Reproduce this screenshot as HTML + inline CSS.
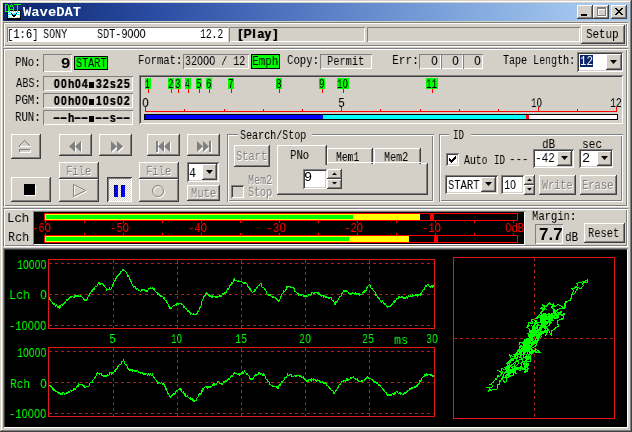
<!DOCTYPE html>
<html><head><meta charset="utf-8">
<style>
*{box-sizing:border-box;margin:0;padding:0}
html,body{width:632px;height:432px;overflow:hidden;background:#D4D0C8}
body{position:relative;font-family:"Liberation Sans",sans-serif;color:#000}
.a{position:absolute}
.t{position:absolute;white-space:nowrap;line-height:1;transform-origin:0 0;will-change:transform}
svg{position:absolute;overflow:visible}
</style></head><body>
<div class="a" style="left:0px;top:0px;width:632px;height:432px;box-shadow:inset -1px -1px #404040,inset 1px 1px #D4D0C8,inset -2px -2px #808080,inset 2px 2px #FFFFFF"></div>
<div class="a" style="left:3px;top:3px;width:626px;height:18px;background:linear-gradient(to right,#0A246A 0px,#2A4CA2 150px,#5479C2 300px,#7EA4DC 450px,#A6CAF0 590px)"></div>
<svg style="left:3px;top:3px" width="20" height="18" shape-rendering="crispEdges"><rect x="4" y="7" width="14" height="10" fill="#000"/><rect x="5" y="8" width="12" height="7" fill="#fff"/><rect x="6" y="8" width="1" height="1" fill="#00FFFF"/><rect x="8" y="8" width="1" height="1" fill="#00FFFF"/><rect x="12" y="8" width="1" height="1" fill="#00FFFF"/><rect x="14" y="8" width="1" height="1" fill="#00FFFF"/><rect x="5" y="9" width="1" height="1" fill="#00FFFF"/><rect x="7" y="9" width="1" height="1" fill="#00FFFF"/><rect x="13" y="9" width="1" height="1" fill="#00FFFF"/><rect x="15" y="9" width="1" height="1" fill="#00FFFF"/><rect x="5" y="11" width="4" height="1" fill="#00FFFF"/><rect x="13" y="11" width="4" height="1" fill="#00FFFF"/><rect x="10" y="10" width="2" height="2" fill="#00FFFF"/><rect x="8" y="10" width="1" height="1" fill="#000"/><rect x="13" y="10" width="1" height="1" fill="#000"/><rect x="9" y="11" width="1" height="2" fill="#000"/><rect x="12" y="11" width="1" height="2" fill="#000"/><rect x="10" y="12" width="2" height="2" fill="#000"/><rect x="6" y="14" width="1" height="1" fill="#00FFFF"/><rect x="8" y="14" width="1" height="1" fill="#00FFFF"/><rect x="14" y="14" width="1" height="1" fill="#00FFFF"/><rect x="16" y="14" width="1" height="1" fill="#00FFFF"/><rect x="5" y="13" width="1" height="1" fill="#00FFFF"/><rect x="2" y="1" width="1" height="8" fill="#00FF00"/><rect x="3" y="1" width="2" height="1" fill="#00FF00"/><rect x="3" y="8" width="2" height="1" fill="#00FF00"/><rect x="5" y="2" width="1" height="6" fill="#00FF00"/><rect x="6" y="4" width="1" height="5" fill="#00FF00"/><rect x="7" y="2" width="1" height="2" fill="#00FF00"/><rect x="8" y="1" width="1" height="1" fill="#00FF00"/><rect x="9" y="2" width="1" height="2" fill="#00FF00"/><rect x="10" y="4" width="1" height="5" fill="#00FF00"/><rect x="7" y="6" width="3" height="1" fill="#00FF00"/><rect x="11" y="1" width="7" height="1" fill="#00FF00"/><rect x="14" y="2" width="1" height="7" fill="#00FF00"/></svg>
<div class="t" style="left:23.0px;top:6px;font-family:'Liberation Mono';font-size:13.6px;font-weight:bold;color:#fff;transform:scaleX(1.018);">WaveDAT</div>
<div class="a" style="left:577px;top:5px;width:16px;height:14px;background:#D4D0C8;box-shadow:inset -1px -1px #404040,inset 1px 1px #FFFFFF,inset -2px -2px #808080"></div>
<div class="a" style="left:593px;top:5px;width:16px;height:14px;background:#D4D0C8;box-shadow:inset -1px -1px #404040,inset 1px 1px #FFFFFF,inset -2px -2px #808080"></div>
<div class="a" style="left:611px;top:5px;width:16px;height:14px;background:#D4D0C8;box-shadow:inset -1px -1px #404040,inset 1px 1px #FFFFFF,inset -2px -2px #808080"></div>
<div class="a" style="left:581px;top:14px;width:6px;height:2px;background:#000"></div>
<div class="a" style="left:598px;top:8px;width:9px;height:9px;border:1px solid #fff;border-top-width:2px"></div>
<div class="a" style="left:597px;top:7px;width:9px;height:9px;border:1px solid #808080;border-top-width:2px"></div>
<svg style="left:615px;top:8px" width="8" height="7" shape-rendering="crispEdges"><rect x="0" y="0" width="1" height="1"/><rect x="1" y="0" width="1" height="1"/><rect x="6" y="0" width="1" height="1"/><rect x="7" y="0" width="1" height="1"/><rect x="1" y="1" width="1" height="1"/><rect x="2" y="1" width="1" height="1"/><rect x="5" y="1" width="1" height="1"/><rect x="6" y="1" width="1" height="1"/><rect x="2" y="2" width="1" height="1"/><rect x="3" y="2" width="1" height="1"/><rect x="4" y="2" width="1" height="1"/><rect x="5" y="2" width="1" height="1"/><rect x="3" y="3" width="1" height="1"/><rect x="4" y="3" width="1" height="1"/><rect x="2" y="4" width="1" height="1"/><rect x="3" y="4" width="1" height="1"/><rect x="4" y="4" width="1" height="1"/><rect x="5" y="4" width="1" height="1"/><rect x="1" y="5" width="1" height="1"/><rect x="2" y="5" width="1" height="1"/><rect x="5" y="5" width="1" height="1"/><rect x="6" y="5" width="1" height="1"/><rect x="0" y="6" width="1" height="1"/><rect x="1" y="6" width="1" height="1"/><rect x="6" y="6" width="1" height="1"/><rect x="7" y="6" width="1" height="1"/></svg>
<div class="a" style="left:3px;top:22px;width:625px;height:25px;box-shadow:inset 1px 1px #808080,inset -1px -1px #FFFFFF,inset 2px 2px #FFFFFF,inset -2px -2px #808080"></div>
<div class="a" style="left:7px;top:27px;width:221px;height:15px;background:#fff;box-shadow:inset 1px 1px #808080,inset -1px -1px #FFFFFF"></div>
<div class="t" style="left:6.69px;top:28px;font-family:'Liberation Mono';font-size:13.6px;font-weight:normal;color:#000;transform:scaleX(0.771);">[1:6]</div>
<div class="t" style="left:43.26px;top:28px;font-family:'Liberation Mono';font-size:13.6px;font-weight:normal;color:#000;transform:scaleX(0.742);">SONY</div>
<div class="t" style="left:97.25px;top:28px;font-family:'Liberation Mono';font-size:13.6px;font-weight:normal;color:#000;transform:scaleX(0.746);">SDT-9OOO</div>
<div class="t" style="left:200.29px;top:28px;font-family:'Liberation Mono';font-size:13.6px;font-weight:normal;color:#000;transform:scaleX(0.71);">12.2</div>
<div class="a" style="left:229px;top:27px;width:136px;height:15px;box-shadow:inset 1px 1px #808080,inset -1px -1px #FFFFFF"></div>
<div class="t" style="left:237.84px;top:27px;width:4.33px;text-align:center;font-family:'Liberation Sans';font-size:13px;font-weight:bold;color:#000;transform:scaleX(0.9);transform-origin:50% 0;text-shadow:0.5px 0 #000">[</div>
<div class="t" style="left:242.66px;top:27px;width:8.67px;text-align:center;font-family:'Liberation Sans';font-size:13px;font-weight:bold;color:#000;transform:scaleX(0.9);transform-origin:50% 0;text-shadow:0.5px 0 #000">P</div>
<div class="t" style="left:252.19px;top:27px;width:3.61px;text-align:center;font-family:'Liberation Sans';font-size:13px;font-weight:bold;color:#000;transform:scaleX(0.9);transform-origin:50% 0;text-shadow:0.5px 0 #000">l</div>
<div class="t" style="left:257.38px;top:27px;width:7.23px;text-align:center;font-family:'Liberation Sans';font-size:13px;font-weight:bold;color:#000;transform:scaleX(0.9);transform-origin:50% 0;text-shadow:0.5px 0 #000">a</div>
<div class="t" style="left:264.38px;top:27px;width:7.23px;text-align:center;font-family:'Liberation Sans';font-size:13px;font-weight:bold;color:#000;transform:scaleX(0.9);transform-origin:50% 0;text-shadow:0.5px 0 #000">y</div>
<div class="t" style="left:272.84px;top:27px;width:4.33px;text-align:center;font-family:'Liberation Sans';font-size:13px;font-weight:bold;color:#000;transform:scaleX(0.9);transform-origin:50% 0;text-shadow:0.5px 0 #000">]</div>
<div class="a" style="left:367px;top:27px;width:213px;height:15px;box-shadow:inset 1px 1px #808080,inset -1px -1px #FFFFFF"></div>
<div class="a" style="left:581px;top:25px;width:44px;height:19px;background:#D4D0C8;box-shadow:inset -1px -1px #404040,inset 1px 1px #FFFFFF,inset -2px -2px #808080"></div>
<div class="t" style="left:586.21px;top:28px;font-family:'Liberation Mono';font-size:13.6px;font-weight:normal;color:#000;transform:scaleX(0.795);">Setup</div>
<div class="a" style="left:3px;top:48px;width:625px;height:159px;box-shadow:inset 1px 1px #808080,inset -1px -1px #FFFFFF,inset 2px 2px #FFFFFF,inset -2px -2px #808080"></div>
<div class="t" style="left:15.21px;top:56px;font-family:'Liberation Mono';font-size:13.6px;font-weight:normal;color:#000;transform:scaleX(0.786);">PNo:</div>
<div class="a" style="left:43px;top:54px;width:29px;height:18px;box-shadow:inset 1px 1px #808080,inset -1px -1px #FFFFFF"></div>
<div class="t" style="left:60.86px;top:56px;font-family:'Liberation Sans';font-size:14.5px;font-weight:bold;color:#000;transform:scaleX(1.143);">9</div>
<div class="a" style="left:74px;top:56px;width:34px;height:14px;background:#00FF00;border:1px solid #000"></div>
<div class="t" style="left:76.26px;top:57px;font-family:'Liberation Mono';font-size:13.6px;font-weight:normal;color:#000;transform:scaleX(0.744);">START</div>
<div class="t" style="left:16.0px;top:77px;font-family:'Liberation Mono';font-size:13.6px;font-weight:normal;color:#000;transform:scaleX(0.759);">ABS:</div>
<div class="a" style="left:43px;top:76px;width:90px;height:15px;box-shadow:inset 1px 1px #808080,inset -1px -1px #FFFFFF"></div>
<div class="t" style="left:15.21px;top:94px;font-family:'Liberation Mono';font-size:13.6px;font-weight:normal;color:#000;transform:scaleX(0.786);">PGM:</div>
<div class="a" style="left:43px;top:93px;width:90px;height:15px;box-shadow:inset 1px 1px #808080,inset -1px -1px #FFFFFF"></div>
<div class="t" style="left:15.21px;top:111px;font-family:'Liberation Mono';font-size:13.6px;font-weight:normal;color:#000;transform:scaleX(0.786);">RUN:</div>
<div class="a" style="left:43px;top:110px;width:90px;height:15px;box-shadow:inset 1px 1px #808080,inset -1px -1px #FFFFFF"></div>
<div class="t" style="left:52.88px;top:77px;width:7.23px;text-align:center;font-family:'Liberation Sans';font-size:13px;font-weight:bold;color:#000;transform:scaleX(0.8);transform-origin:50% 0;text-shadow:0.5px 0 #000">0</div>
<div class="t" style="left:59.88px;top:77px;width:7.23px;text-align:center;font-family:'Liberation Sans';font-size:13px;font-weight:bold;color:#000;transform:scaleX(0.8);transform-origin:50% 0;text-shadow:0.5px 0 #000">0</div>
<div class="t" style="left:66.53px;top:77px;width:7.94px;text-align:center;font-family:'Liberation Sans';font-size:13px;font-weight:bold;color:#000;transform:scaleX(0.8);transform-origin:50% 0;text-shadow:0.5px 0 #000">h</div>
<div class="t" style="left:73.88px;top:77px;width:7.23px;text-align:center;font-family:'Liberation Sans';font-size:13px;font-weight:bold;color:#000;transform:scaleX(0.8);transform-origin:50% 0;text-shadow:0.5px 0 #000">0</div>
<div class="t" style="left:80.88px;top:77px;width:7.23px;text-align:center;font-family:'Liberation Sans';font-size:13px;font-weight:bold;color:#000;transform:scaleX(0.8);transform-origin:50% 0;text-shadow:0.5px 0 #000">4</div>
<div class="a" style="left:89px;top:82px;width:5px;height:6px;background:#000"></div>
<div class="t" style="left:94.88px;top:77px;width:7.23px;text-align:center;font-family:'Liberation Sans';font-size:13px;font-weight:bold;color:#000;transform:scaleX(0.8);transform-origin:50% 0;text-shadow:0.5px 0 #000">3</div>
<div class="t" style="left:101.88px;top:77px;width:7.23px;text-align:center;font-family:'Liberation Sans';font-size:13px;font-weight:bold;color:#000;transform:scaleX(0.8);transform-origin:50% 0;text-shadow:0.5px 0 #000">2</div>
<div class="t" style="left:108.88px;top:77px;width:7.23px;text-align:center;font-family:'Liberation Sans';font-size:13px;font-weight:bold;color:#000;transform:scaleX(0.8);transform-origin:50% 0;text-shadow:0.5px 0 #000">s</div>
<div class="t" style="left:115.88px;top:77px;width:7.23px;text-align:center;font-family:'Liberation Sans';font-size:13px;font-weight:bold;color:#000;transform:scaleX(0.8);transform-origin:50% 0;text-shadow:0.5px 0 #000">2</div>
<div class="t" style="left:122.88px;top:77px;width:7.23px;text-align:center;font-family:'Liberation Sans';font-size:13px;font-weight:bold;color:#000;transform:scaleX(0.8);transform-origin:50% 0;text-shadow:0.5px 0 #000">5</div>
<div class="t" style="left:52.88px;top:94px;width:7.23px;text-align:center;font-family:'Liberation Sans';font-size:13px;font-weight:bold;color:#000;transform:scaleX(0.8);transform-origin:50% 0;text-shadow:0.5px 0 #000">0</div>
<div class="t" style="left:59.88px;top:94px;width:7.23px;text-align:center;font-family:'Liberation Sans';font-size:13px;font-weight:bold;color:#000;transform:scaleX(0.8);transform-origin:50% 0;text-shadow:0.5px 0 #000">0</div>
<div class="t" style="left:66.53px;top:94px;width:7.94px;text-align:center;font-family:'Liberation Sans';font-size:13px;font-weight:bold;color:#000;transform:scaleX(0.8);transform-origin:50% 0;text-shadow:0.5px 0 #000">h</div>
<div class="t" style="left:73.88px;top:94px;width:7.23px;text-align:center;font-family:'Liberation Sans';font-size:13px;font-weight:bold;color:#000;transform:scaleX(0.8);transform-origin:50% 0;text-shadow:0.5px 0 #000">0</div>
<div class="t" style="left:80.88px;top:94px;width:7.23px;text-align:center;font-family:'Liberation Sans';font-size:13px;font-weight:bold;color:#000;transform:scaleX(0.8);transform-origin:50% 0;text-shadow:0.5px 0 #000">0</div>
<div class="a" style="left:89px;top:99px;width:5px;height:6px;background:#000"></div>
<div class="t" style="left:94.88px;top:94px;width:7.23px;text-align:center;font-family:'Liberation Sans';font-size:13px;font-weight:bold;color:#000;transform:scaleX(0.8);transform-origin:50% 0;text-shadow:0.5px 0 #000">1</div>
<div class="t" style="left:101.88px;top:94px;width:7.23px;text-align:center;font-family:'Liberation Sans';font-size:13px;font-weight:bold;color:#000;transform:scaleX(0.8);transform-origin:50% 0;text-shadow:0.5px 0 #000">0</div>
<div class="t" style="left:108.88px;top:94px;width:7.23px;text-align:center;font-family:'Liberation Sans';font-size:13px;font-weight:bold;color:#000;transform:scaleX(0.8);transform-origin:50% 0;text-shadow:0.5px 0 #000">s</div>
<div class="t" style="left:115.88px;top:94px;width:7.23px;text-align:center;font-family:'Liberation Sans';font-size:13px;font-weight:bold;color:#000;transform:scaleX(0.8);transform-origin:50% 0;text-shadow:0.5px 0 #000">0</div>
<div class="t" style="left:122.88px;top:94px;width:7.23px;text-align:center;font-family:'Liberation Sans';font-size:13px;font-weight:bold;color:#000;transform:scaleX(0.8);transform-origin:50% 0;text-shadow:0.5px 0 #000">2</div>
<div class="t" style="left:54.34px;top:111px;width:4.33px;text-align:center;font-family:'Liberation Sans';font-size:13px;font-weight:bold;color:#000;transform:scaleX(1.6);transform-origin:50% 0;text-shadow:0.5px 0 #000">-</div>
<div class="t" style="left:61.34px;top:111px;width:4.33px;text-align:center;font-family:'Liberation Sans';font-size:13px;font-weight:bold;color:#000;transform:scaleX(1.6);transform-origin:50% 0;text-shadow:0.5px 0 #000">-</div>
<div class="t" style="left:66.53px;top:111px;width:7.94px;text-align:center;font-family:'Liberation Sans';font-size:13px;font-weight:bold;color:#000;transform:scaleX(0.8);transform-origin:50% 0;text-shadow:0.5px 0 #000">h</div>
<div class="t" style="left:75.34px;top:111px;width:4.33px;text-align:center;font-family:'Liberation Sans';font-size:13px;font-weight:bold;color:#000;transform:scaleX(1.6);transform-origin:50% 0;text-shadow:0.5px 0 #000">-</div>
<div class="t" style="left:82.34px;top:111px;width:4.33px;text-align:center;font-family:'Liberation Sans';font-size:13px;font-weight:bold;color:#000;transform:scaleX(1.6);transform-origin:50% 0;text-shadow:0.5px 0 #000">-</div>
<div class="a" style="left:89px;top:116px;width:5px;height:6px;background:#000"></div>
<div class="t" style="left:96.34px;top:111px;width:4.33px;text-align:center;font-family:'Liberation Sans';font-size:13px;font-weight:bold;color:#000;transform:scaleX(1.6);transform-origin:50% 0;text-shadow:0.5px 0 #000">-</div>
<div class="t" style="left:103.34px;top:111px;width:4.33px;text-align:center;font-family:'Liberation Sans';font-size:13px;font-weight:bold;color:#000;transform:scaleX(1.6);transform-origin:50% 0;text-shadow:0.5px 0 #000">-</div>
<div class="t" style="left:108.88px;top:111px;width:7.23px;text-align:center;font-family:'Liberation Sans';font-size:13px;font-weight:bold;color:#000;transform:scaleX(0.8);transform-origin:50% 0;text-shadow:0.5px 0 #000">s</div>
<div class="t" style="left:117.34px;top:111px;width:4.33px;text-align:center;font-family:'Liberation Sans';font-size:13px;font-weight:bold;color:#000;transform:scaleX(1.6);transform-origin:50% 0;text-shadow:0.5px 0 #000">-</div>
<div class="t" style="left:124.34px;top:111px;width:4.33px;text-align:center;font-family:'Liberation Sans';font-size:13px;font-weight:bold;color:#000;transform:scaleX(1.6);transform-origin:50% 0;text-shadow:0.5px 0 #000">-</div>
<div class="t" style="left:138.23px;top:54px;font-family:'Liberation Mono';font-size:13.6px;font-weight:normal;color:#000;transform:scaleX(0.774);">Format:</div>
<div class="a" style="left:183px;top:54px;width:66px;height:15px;box-shadow:inset 1px 1px #808080,inset -1px -1px #FFFFFF"></div>
<div class="t" style="left:185.26px;top:55px;font-family:'Liberation Mono';font-size:13.6px;font-weight:normal;color:#000;transform:scaleX(0.738);">32OOO / 12</div>
<div class="a" style="left:251px;top:54px;width:29px;height:15px;background:#00FF00;border:1px solid #000"></div>
<div class="t" style="left:252.19px;top:55px;font-family:'Liberation Mono';font-size:13.6px;font-weight:normal;color:#000;transform:scaleX(0.806);">Emph</div>
<div class="t" style="left:287.22px;top:54px;font-family:'Liberation Mono';font-size:13.6px;font-weight:normal;color:#000;transform:scaleX(0.784);">Copy:</div>
<div class="a" style="left:320px;top:54px;width:52px;height:15px;box-shadow:inset 1px 1px #808080,inset -1px -1px #FFFFFF"></div>
<div class="t" style="left:327.24px;top:55px;font-family:'Liberation Mono';font-size:13.6px;font-weight:normal;color:#000;transform:scaleX(0.761);">Permit</div>
<div class="t" style="left:392.18px;top:54px;font-family:'Liberation Mono';font-size:13.6px;font-weight:normal;color:#000;transform:scaleX(0.821);">Err:</div>
<div class="a" style="left:419px;top:54px;width:22px;height:15px;box-shadow:inset 1px 1px #808080,inset -1px -1px #FFFFFF"></div>
<div class="a" style="left:441px;top:54px;width:22px;height:15px;box-shadow:inset 1px 1px #808080,inset -1px -1px #FFFFFF"></div>
<div class="a" style="left:463px;top:54px;width:20px;height:15px;box-shadow:inset 1px 1px #808080,inset -1px -1px #FFFFFF"></div>
<div class="t" style="left:431.17px;top:55px;font-family:'Liberation Mono';font-size:13.6px;font-weight:normal;color:#000;transform:scaleX(0.833);">O</div>
<div class="t" style="left:452.17px;top:55px;font-family:'Liberation Mono';font-size:13.6px;font-weight:normal;color:#000;transform:scaleX(0.833);">O</div>
<div class="t" style="left:474.17px;top:55px;font-family:'Liberation Mono';font-size:13.6px;font-weight:normal;color:#000;transform:scaleX(0.833);">O</div>
<div class="t" style="left:503.0px;top:54px;font-family:'Liberation Mono';font-size:13.6px;font-weight:normal;color:#000;transform:scaleX(0.737);">Tape Length:</div>
<div class="a" style="left:577px;top:52px;width:46px;height:20px;background:#fff;box-shadow:inset 1px 1px #808080,inset -1px -1px #FFFFFF,inset 2px 2px #404040,inset -2px -2px #D4D0C8"></div>
<div class="a" style="left:580px;top:55px;width:13px;height:12px;background:#0A246A"></div>
<div class="t" style="left:580.21px;top:55px;font-family:'Liberation Mono';font-size:13.6px;font-weight:normal;color:#fff;transform:scaleX(0.786);">12</div>
<div class="a" style="left:606px;top:54px;width:16px;height:16px;background:#D4D0C8;box-shadow:inset -1px -1px #404040,inset 1px 1px #FFFFFF,inset -2px -2px #808080"></div>
<svg style="left:610px;top:60px" width="7" height="4"><path d="M0 0h7L3.5 4z" fill="#000"/></svg>
<div class="a" style="left:139px;top:75px;width:484px;height:49px;background:#D4D0C8;box-shadow:inset 1px 1px #808080,inset -1px -1px #FFFFFF,inset 2px 2px #404040,inset -2px -2px #D4D0C8"></div>
<div class="a" style="left:145px;top:78px;width:6px;height:11px;background:#00FF00"></div>
<div class="a" style="left:148px;top:89px;width:1px;height:4px;background:#FF0000"></div>
<div class="t" style="left:145.43px;top:78px;font-family:'Liberation Mono';font-size:13.6px;font-weight:normal;color:#000;transform:scaleX(0.571);">1</div>
<div class="a" style="left:168px;top:78px;width:6px;height:11px;background:#00FF00"></div>
<div class="a" style="left:171px;top:89px;width:1px;height:4px;background:#FF0000"></div>
<div class="t" style="left:168.33px;top:78px;font-family:'Liberation Mono';font-size:13.6px;font-weight:normal;color:#000;transform:scaleX(0.667);">2</div>
<div class="a" style="left:175px;top:78px;width:6px;height:11px;background:#00FF00"></div>
<div class="a" style="left:178px;top:89px;width:1px;height:4px;background:#FF0000"></div>
<div class="t" style="left:175.33px;top:78px;font-family:'Liberation Mono';font-size:13.6px;font-weight:normal;color:#000;transform:scaleX(0.667);">3</div>
<div class="a" style="left:185px;top:78px;width:6px;height:11px;background:#00FF00"></div>
<div class="a" style="left:188px;top:89px;width:1px;height:4px;background:#FF0000"></div>
<div class="t" style="left:185.43px;top:78px;font-family:'Liberation Mono';font-size:13.6px;font-weight:normal;color:#000;transform:scaleX(0.571);">4</div>
<div class="a" style="left:196px;top:78px;width:6px;height:11px;background:#00FF00"></div>
<div class="a" style="left:199px;top:89px;width:1px;height:4px;background:#FF0000"></div>
<div class="t" style="left:196.33px;top:78px;font-family:'Liberation Mono';font-size:13.6px;font-weight:normal;color:#000;transform:scaleX(0.667);">5</div>
<div class="a" style="left:206px;top:78px;width:6px;height:11px;background:#00FF00"></div>
<div class="a" style="left:209px;top:89px;width:1px;height:4px;background:#FF0000"></div>
<div class="t" style="left:206.33px;top:78px;font-family:'Liberation Mono';font-size:13.6px;font-weight:normal;color:#000;transform:scaleX(0.667);">6</div>
<div class="a" style="left:228px;top:78px;width:6px;height:11px;background:#00FF00"></div>
<div class="a" style="left:231px;top:89px;width:1px;height:4px;background:#FF0000"></div>
<div class="t" style="left:228.33px;top:78px;font-family:'Liberation Mono';font-size:13.6px;font-weight:normal;color:#000;transform:scaleX(0.667);">7</div>
<div class="a" style="left:276px;top:78px;width:6px;height:11px;background:#00FF00"></div>
<div class="a" style="left:279px;top:89px;width:1px;height:4px;background:#FF0000"></div>
<div class="t" style="left:276.33px;top:78px;font-family:'Liberation Mono';font-size:13.6px;font-weight:normal;color:#000;transform:scaleX(0.667);">8</div>
<div class="a" style="left:319px;top:78px;width:6px;height:11px;background:#00FF00"></div>
<div class="a" style="left:322px;top:89px;width:1px;height:4px;background:#FF0000"></div>
<div class="t" style="left:319.33px;top:78px;font-family:'Liberation Mono';font-size:13.6px;font-weight:normal;color:#000;transform:scaleX(0.667);">9</div>
<div class="a" style="left:337px;top:78px;width:12px;height:11px;background:#00FF00"></div>
<div class="a" style="left:343px;top:89px;width:1px;height:4px;background:#FF0000"></div>
<div class="t" style="left:337.33px;top:78px;font-family:'Liberation Mono';font-size:13.6px;font-weight:normal;color:#000;transform:scaleX(0.667);">1O</div>
<div class="a" style="left:426px;top:78px;width:12px;height:11px;background:#00FF00"></div>
<div class="a" style="left:432px;top:89px;width:1px;height:4px;background:#FF0000"></div>
<div class="t" style="left:426.33px;top:78px;font-family:'Liberation Mono';font-size:13.6px;font-weight:normal;color:#000;transform:scaleX(0.667);">11</div>
<div class="t" style="left:142.17px;top:97px;font-family:'Liberation Mono';font-size:13.6px;font-weight:normal;color:#000;transform:scaleX(0.833);">O</div>
<div class="t" style="left:338.17px;top:97px;font-family:'Liberation Mono';font-size:13.6px;font-weight:normal;color:#000;transform:scaleX(0.833);">5</div>
<div class="t" style="left:531.33px;top:97px;font-family:'Liberation Mono';font-size:13.6px;font-weight:normal;color:#000;transform:scaleX(0.667);">1O</div>
<div class="t" style="left:610.29px;top:97px;font-family:'Liberation Mono';font-size:13.6px;font-weight:normal;color:#000;transform:scaleX(0.714);">12</div>
<div class="a" style="left:145px;top:111px;width:472px;height:1px;background:#FF0000"></div>
<div class="a" style="left:145px;top:107px;width:1px;height:5px;background:#FF0000"></div>
<div class="a" style="left:184px;top:109px;width:1px;height:3px;background:#FF0000"></div>
<div class="a" style="left:224px;top:109px;width:1px;height:3px;background:#FF0000"></div>
<div class="a" style="left:263px;top:109px;width:1px;height:3px;background:#FF0000"></div>
<div class="a" style="left:302px;top:109px;width:1px;height:3px;background:#FF0000"></div>
<div class="a" style="left:341px;top:107px;width:1px;height:5px;background:#FF0000"></div>
<div class="a" style="left:380px;top:109px;width:1px;height:3px;background:#FF0000"></div>
<div class="a" style="left:420px;top:109px;width:1px;height:3px;background:#FF0000"></div>
<div class="a" style="left:459px;top:109px;width:1px;height:3px;background:#FF0000"></div>
<div class="a" style="left:498px;top:109px;width:1px;height:3px;background:#FF0000"></div>
<div class="a" style="left:538px;top:107px;width:1px;height:5px;background:#FF0000"></div>
<div class="a" style="left:577px;top:109px;width:1px;height:3px;background:#FF0000"></div>
<div class="a" style="left:616px;top:107px;width:1px;height:5px;background:#FF0000"></div>
<div class="a" style="left:144px;top:114px;width:474px;height:6px;background:#fff;border:1px solid #000"></div>
<div class="a" style="left:145px;top:115px;width:178px;height:4px;background:#0000FF"></div>
<div class="a" style="left:323px;top:115px;width:203px;height:4px;background:#00FFFF"></div>
<div class="a" style="left:526px;top:115px;width:3px;height:4px;background:#FF0000"></div>
<div class="a" style="left:11px;top:134px;width:30px;height:25px;background:#D4D0C8;box-shadow:inset -1px -1px #404040,inset 1px 1px #FFFFFF,inset -2px -2px #808080"></div>
<svg style="left:0;top:0" width="632" height="432" shape-rendering="crispEdges"><rect x="24" y="140" width="1" height="1" fill="#808080"/><rect x="24" y="140" width="1" height="1" fill="#808080"/><rect x="23" y="141" width="1" height="1" fill="#808080"/><rect x="25" y="141" width="1" height="1" fill="#808080"/><rect x="22" y="142" width="1" height="1" fill="#808080"/><rect x="26" y="142" width="1" height="1" fill="#808080"/><rect x="21" y="143" width="1" height="1" fill="#808080"/><rect x="27" y="143" width="1" height="1" fill="#808080"/><rect x="20" y="144" width="1" height="1" fill="#808080"/><rect x="28" y="144" width="1" height="1" fill="#808080"/><rect x="19" y="145" width="1" height="1" fill="#808080"/><rect x="29" y="145" width="1" height="1" fill="#808080"/><rect x="19" y="146" width="1" height="1" fill="#808080"/><rect x="20" y="146" width="11" height="1" fill="#fff"/><rect x="19" y="149" width="11" height="1" fill="#808080"/><rect x="19" y="150" width="1" height="2" fill="#808080"/><rect x="20" y="152" width="11" height="1" fill="#fff"/><rect x="30" y="150" width="1" height="2" fill="#fff"/></svg>
<div class="a" style="left:59px;top:134px;width:33px;height:22px;background:#D4D0C8;box-shadow:inset -1px -1px #404040,inset 1px 1px #FFFFFF,inset -2px -2px #808080"></div>
<div class="a" style="left:99px;top:134px;width:33px;height:22px;background:#D4D0C8;box-shadow:inset -1px -1px #404040,inset 1px 1px #FFFFFF,inset -2px -2px #808080"></div>
<div class="a" style="left:147px;top:134px;width:33px;height:22px;background:#D4D0C8;box-shadow:inset -1px -1px #404040,inset 1px 1px #FFFFFF,inset -2px -2px #808080"></div>
<div class="a" style="left:187px;top:134px;width:33px;height:22px;background:#D4D0C8;box-shadow:inset -1px -1px #404040,inset 1px 1px #FFFFFF,inset -2px -2px #808080"></div>
<svg style="left:0;top:0" width="632" height="432"><g transform="translate(1,1)"><path d="M69 146.5L75 141V152z" fill="#fff"/><path d="M75 146.5L81 141V152z" fill="#fff"/></g><path d="M69 146.5L75 141V152z" fill="#808080"/><path d="M75 146.5L81 141V152z" fill="#808080"/></svg>
<svg style="left:0;top:0" width="632" height="432"><g transform="translate(1,1)"><path d="M117 146.5L111 141V152z" fill="#fff"/><path d="M123 146.5L117 141V152z" fill="#fff"/></g><path d="M117 146.5L111 141V152z" fill="#808080"/><path d="M123 146.5L117 141V152z" fill="#808080"/></svg>
<svg style="left:0;top:0" width="632" height="432"><g transform="translate(1,1)"><rect x="156" y="141" width="2" height="11" fill="#fff"/><path d="M158 146.5L164 141V152z" fill="#fff"/><path d="M164 146.5L170 141V152z" fill="#fff"/></g><rect x="156" y="141" width="2" height="11" fill="#808080"/><path d="M158 146.5L164 141V152z" fill="#808080"/><path d="M164 146.5L170 141V152z" fill="#808080"/></svg>
<svg style="left:0;top:0" width="632" height="432"><g transform="translate(1,1)"><path d="M203 146.5L197 141V152z" fill="#fff"/><path d="M209 146.5L203 141V152z" fill="#fff"/><rect x="209" y="141" width="2" height="11" fill="#fff"/></g><path d="M203 146.5L197 141V152z" fill="#808080"/><path d="M209 146.5L203 141V152z" fill="#808080"/><rect x="209" y="141" width="2" height="11" fill="#808080"/></svg>
<div class="a" style="left:11px;top:177px;width:40px;height:25px;background:#D4D0C8;box-shadow:inset -1px -1px #404040,inset 1px 1px #FFFFFF,inset -2px -2px #808080"></div>
<div class="a" style="left:25px;top:185px;width:11px;height:11px;background:#fff"></div>
<div class="a" style="left:24px;top:184px;width:11px;height:11px;background:#000"></div>
<div class="a" style="left:59px;top:162px;width:40px;height:17px;background:#D4D0C8;box-shadow:inset -1px -1px #404040,inset 1px 1px #FFFFFF,inset -2px -2px #808080"></div>
<div class="t" style="left:66.23px;top:165px;font-family:'Liberation Mono';font-size:13.6px;font-weight:normal;color:#808080;transform:scaleX(0.774);text-shadow:1px 1px #fff;">File</div>
<div class="a" style="left:59px;top:179px;width:40px;height:23px;background:#D4D0C8;box-shadow:inset -1px -1px #404040,inset 1px 1px #FFFFFF,inset -2px -2px #808080"></div>
<svg style="left:0;top:0" width="632" height="432"><path d="M73.5 184.5v12l12-6z" fill="none" stroke="#fff" transform="translate(1,1)"/><path d="M73.5 184.5v12l12-6z" fill="none" stroke="#808080"/></svg>
<div class="a" style="left:107px;top:177px;width:25px;height:25px;background:repeating-conic-gradient(#fff 0 25%,#D4D0C8 0 50%) 0 0/2px 2px;box-shadow:inset 1px 1px #404040,inset -1px -1px #FFFFFF,inset 2px 2px #808080"></div>
<div class="a" style="left:114px;top:185px;width:4px;height:12px;background:#0000FF;box-shadow:inset 1px 1px #000080"></div>
<div class="a" style="left:121px;top:185px;width:4px;height:12px;background:#0000FF;box-shadow:inset 1px 1px #000080"></div>
<div class="a" style="left:139px;top:162px;width:40px;height:17px;background:#D4D0C8;box-shadow:inset -1px -1px #404040,inset 1px 1px #FFFFFF,inset -2px -2px #808080"></div>
<div class="t" style="left:146.23px;top:165px;font-family:'Liberation Mono';font-size:13.6px;font-weight:normal;color:#808080;transform:scaleX(0.774);text-shadow:1px 1px #fff;">File</div>
<div class="a" style="left:139px;top:179px;width:40px;height:23px;background:#D4D0C8;box-shadow:inset -1px -1px #404040,inset 1px 1px #FFFFFF,inset -2px -2px #808080"></div>
<svg style="left:0;top:0" width="632" height="432"><circle cx="159" cy="192" r="5.5" fill="none" stroke="#fff"/><circle cx="158" cy="191" r="5.5" fill="none" stroke="#808080"/></svg>
<div class="a" style="left:187px;top:162px;width:32px;height:20px;background:#fff;box-shadow:inset 1px 1px #808080,inset -1px -1px #FFFFFF,inset 2px 2px #404040,inset -2px -2px #D4D0C8"></div>
<div class="t" style="left:189.14px;top:167px;font-family:'Liberation Mono';font-size:13.6px;font-weight:normal;color:#000;transform:scaleX(0.857);">4</div>
<div class="a" style="left:202px;top:164px;width:15px;height:16px;background:#D4D0C8;box-shadow:inset -1px -1px #404040,inset 1px 1px #FFFFFF,inset -2px -2px #808080"></div>
<svg style="left:206px;top:170px" width="7" height="4"><path d="M0 0h7L3.5 4z" fill="#000"/></svg>
<div class="a" style="left:187px;top:185px;width:33px;height:16px;background:#D4D0C8;box-shadow:inset -1px -1px #404040,inset 1px 1px #FFFFFF,inset -2px -2px #808080"></div>
<div class="t" style="left:191.23px;top:187px;font-family:'Liberation Mono';font-size:13.6px;font-weight:normal;color:#808080;transform:scaleX(0.774);text-shadow:1px 1px #fff;">Mute</div>
<div class="a" style="left:227px;top:134px;width:207px;height:68px;box-shadow:inset 1px 1px #808080,inset -1px -1px #FFFFFF,inset 2px 2px #FFFFFF,inset -2px -2px #808080"></div>
<div class="a" style="left:238px;top:127px;width:74px;height:11px;background:#D4D0C8"></div>
<div class="t" style="left:240.26px;top:129px;font-family:'Liberation Mono';font-size:13.6px;font-weight:normal;color:#000;transform:scaleX(0.739);">Search/Stop</div>
<div class="a" style="left:234px;top:145px;width:36px;height:22px;background:#D4D0C8;box-shadow:inset -1px -1px #404040,inset 1px 1px #FFFFFF,inset -2px -2px #808080"></div>
<div class="t" style="left:236.24px;top:150px;font-family:'Liberation Mono';font-size:13.6px;font-weight:normal;color:#808080;transform:scaleX(0.763);text-shadow:1px 1px #fff;">Start</div>
<div class="a" style="left:231px;top:185px;width:13px;height:13px;background:#D4D0C8;box-shadow:inset 1px 1px #808080,inset -1px -1px #FFFFFF,inset 2px 2px #404040,inset -2px -2px #D4D0C8"></div>
<div class="t" style="left:248.26px;top:174px;font-family:'Liberation Mono';font-size:13.6px;font-weight:normal;color:#808080;transform:scaleX(0.742);text-shadow:1px 1px #fff;">Mem2</div>
<div class="t" style="left:248.26px;top:186px;font-family:'Liberation Mono';font-size:13.6px;font-weight:normal;color:#808080;transform:scaleX(0.742);text-shadow:1px 1px #fff;">Stop</div>
<div class="a" style="left:277px;top:163px;width:151px;height:32px;background:#D4D0C8;box-shadow:inset -1px -1px #404040,inset 1px 1px #FFFFFF,inset -2px -2px #808080"></div>
<div class="a" style="left:327px;top:148px;width:46px;height:16px;background:#D4D0C8;box-shadow:inset -1px 0 #404040,inset 1px 1px #FFFFFF,inset -2px 0 #808080"></div>
<div class="a" style="left:374px;top:148px;width:47px;height:16px;background:#D4D0C8;box-shadow:inset -1px 0 #404040,inset 1px 1px #FFFFFF,inset -2px 0 #808080"></div>
<div class="a" style="left:327px;top:162px;width:94px;height:1px;background:#FFFFFF"></div>
<div class="a" style="left:277px;top:145px;width:50px;height:20px;background:#D4D0C8;box-shadow:inset -1px 0 #404040,inset 1px 1px #FFFFFF,inset -2px 0 #808080"></div>
<div class="t" style="left:290.22px;top:149px;font-family:'Liberation Mono';font-size:13.6px;font-weight:normal;color:#000;transform:scaleX(0.783);">PNo</div>
<div class="t" style="left:336.29px;top:151px;font-family:'Liberation Mono';font-size:13.6px;font-weight:normal;color:#000;transform:scaleX(0.71);">Mem1</div>
<div class="t" style="left:384.26px;top:151px;font-family:'Liberation Mono';font-size:13.6px;font-weight:normal;color:#000;transform:scaleX(0.742);">Mem2</div>
<div class="a" style="left:303px;top:169px;width:24px;height:20px;background:#fff;box-shadow:inset 1px 1px #808080,inset -1px -1px #FFFFFF,inset 2px 2px #404040,inset -2px -2px #D4D0C8"></div>
<div class="t" style="left:304.0px;top:171px;font-family:'Liberation Mono';font-size:13.6px;font-weight:normal;color:#000;transform:scaleX(1.0);">9</div>
<div class="a" style="left:327px;top:169px;width:15px;height:10px;background:#D4D0C8;box-shadow:inset -1px -1px #404040,inset 1px 1px #FFFFFF,inset -2px -2px #808080"></div>
<div class="a" style="left:327px;top:179px;width:15px;height:10px;background:#D4D0C8;box-shadow:inset -1px -1px #404040,inset 1px 1px #FFFFFF,inset -2px -2px #808080"></div>
<svg style="left:0;top:0" width="632" height="432"><path d="M332 175h5l-2.5-2.5z M332 182h5l-2.5 2.5z" fill="#000"/></svg>
<div class="a" style="left:439px;top:134px;width:184px;height:68px;box-shadow:inset 1px 1px #808080,inset -1px -1px #FFFFFF,inset 2px 2px #FFFFFF,inset -2px -2px #808080"></div>
<div class="a" style="left:449px;top:127px;width:22px;height:11px;background:#D4D0C8"></div>
<div class="t" style="left:453.33px;top:129px;font-family:'Liberation Mono';font-size:13.6px;font-weight:normal;color:#000;transform:scaleX(0.667);">ID</div>
<div class="t" style="left:542.2px;top:138px;font-family:'Liberation Mono';font-size:13.6px;font-weight:normal;color:#000;transform:scaleX(0.8);">dB</div>
<div class="t" style="left:582.18px;top:138px;font-family:'Liberation Mono';font-size:13.6px;font-weight:normal;color:#000;transform:scaleX(0.818);">sec</div>
<div class="a" style="left:446px;top:153px;width:13px;height:13px;background:#fff;box-shadow:inset 1px 1px #808080,inset -1px -1px #FFFFFF,inset 2px 2px #404040,inset -2px -2px #D4D0C8"></div>
<svg style="left:449px;top:156px" width="7" height="7" shape-rendering="crispEdges"><rect x="6" y="0" width="1" height="1"/><rect x="5" y="1" width="1" height="1"/><rect x="6" y="1" width="1" height="1"/><rect x="0" y="2" width="1" height="1"/><rect x="4" y="2" width="1" height="1"/><rect x="5" y="2" width="1" height="1"/><rect x="6" y="2" width="1" height="1"/><rect x="0" y="3" width="1" height="1"/><rect x="1" y="3" width="1" height="1"/><rect x="3" y="3" width="1" height="1"/><rect x="4" y="3" width="1" height="1"/><rect x="5" y="3" width="1" height="1"/><rect x="0" y="4" width="1" height="1"/><rect x="1" y="4" width="1" height="1"/><rect x="2" y="4" width="1" height="1"/><rect x="3" y="4" width="1" height="1"/><rect x="4" y="4" width="1" height="1"/><rect x="1" y="5" width="1" height="1"/><rect x="2" y="5" width="1" height="1"/><rect x="3" y="5" width="1" height="1"/><rect x="2" y="6" width="1" height="1"/></svg>
<div class="t" style="left:464.0px;top:154px;font-family:'Liberation Mono';font-size:13.6px;font-weight:normal;color:#000;transform:scaleX(0.719);">Auto</div>
<div class="t" style="left:494.33px;top:154px;font-family:'Liberation Mono';font-size:13.6px;font-weight:normal;color:#000;transform:scaleX(0.667);">ID</div>
<div class="t" style="left:509.4px;top:153px;font-family:'Liberation Mono';font-size:13.6px;font-weight:normal;color:#000;transform:scaleX(0.8);">---</div>
<div class="a" style="left:533px;top:149px;width:41px;height:19px;background:#fff;box-shadow:inset 1px 1px #808080,inset -1px -1px #FFFFFF,inset 2px 2px #404040,inset -2px -2px #D4D0C8"></div>
<div class="t" style="left:535.38px;top:152px;font-family:'Liberation Mono';font-size:13.6px;font-weight:normal;color:#000;transform:scaleX(0.81);">-42</div>
<div class="a" style="left:557px;top:151px;width:15px;height:15px;background:#D4D0C8;box-shadow:inset -1px -1px #404040,inset 1px 1px #FFFFFF,inset -2px -2px #808080"></div>
<div class="a" style="left:579px;top:149px;width:34px;height:19px;background:#fff;box-shadow:inset 1px 1px #808080,inset -1px -1px #FFFFFF,inset 2px 2px #404040,inset -2px -2px #D4D0C8"></div>
<div class="t" style="left:582.0px;top:152px;font-family:'Liberation Mono';font-size:13.6px;font-weight:normal;color:#000;transform:scaleX(1.0);">2</div>
<div class="a" style="left:597px;top:151px;width:15px;height:15px;background:#D4D0C8;box-shadow:inset -1px -1px #404040,inset 1px 1px #FFFFFF,inset -2px -2px #808080"></div>
<svg style="left:0;top:0" width="632" height="432"><path d="M561 156h7l-3.5 4z M601 156h7l-3.5 4z" fill="#000"/></svg>
<div class="a" style="left:445px;top:175px;width:53px;height:19px;background:#fff;box-shadow:inset 1px 1px #808080,inset -1px -1px #FFFFFF,inset 2px 2px #404040,inset -2px -2px #D4D0C8"></div>
<div class="t" style="left:448.23px;top:179px;font-family:'Liberation Mono';font-size:13.6px;font-weight:normal;color:#000;transform:scaleX(0.769);">START</div>
<div class="a" style="left:481px;top:177px;width:15px;height:15px;background:#D4D0C8;box-shadow:inset -1px -1px #404040,inset 1px 1px #FFFFFF,inset -2px -2px #808080"></div>
<svg style="left:0;top:0" width="632" height="432"><path d="M485 182h7l-3.5 4z" fill="#000"/></svg>
<div class="a" style="left:501px;top:175px;width:23px;height:19px;background:#fff;box-shadow:inset 1px 1px #808080,inset -1px -1px #FFFFFF,inset 2px 2px #404040,inset -2px -2px #D4D0C8"></div>
<div class="t" style="left:504.27px;top:179px;font-family:'Liberation Mono';font-size:13.6px;font-weight:normal;color:#000;transform:scaleX(0.733);">1O</div>
<div class="a" style="left:524px;top:175px;width:11px;height:10px;background:#D4D0C8;box-shadow:inset -1px -1px #404040,inset 1px 1px #FFFFFF,inset -2px -2px #808080"></div>
<div class="a" style="left:524px;top:185px;width:11px;height:10px;background:#D4D0C8;box-shadow:inset -1px -1px #404040,inset 1px 1px #FFFFFF,inset -2px -2px #808080"></div>
<svg style="left:0;top:0" width="632" height="432"><path d="M527 181h5l-2.5-2.5z M527 188h5l-2.5 2.5z" fill="#000"/></svg>
<div class="a" style="left:539px;top:175px;width:37px;height:20px;background:#D4D0C8;box-shadow:inset -1px -1px #404040,inset 1px 1px #FFFFFF,inset -2px -2px #808080"></div>
<div class="t" style="left:542.0px;top:179px;font-family:'Liberation Mono';font-size:13.6px;font-weight:normal;color:#808080;transform:scaleX(0.75);text-shadow:1px 1px #fff;">Write</div>
<div class="a" style="left:580px;top:175px;width:37px;height:20px;background:#D4D0C8;box-shadow:inset -1px -1px #404040,inset 1px 1px #FFFFFF,inset -2px -2px #808080"></div>
<div class="t" style="left:582.23px;top:179px;font-family:'Liberation Mono';font-size:13.6px;font-weight:normal;color:#808080;transform:scaleX(0.769);text-shadow:1px 1px #fff;">Erase</div>
<div class="a" style="left:3px;top:208px;width:625px;height:39px;box-shadow:inset 1px 1px #808080,inset -1px -1px #FFFFFF,inset 2px 2px #FFFFFF,inset -2px -2px #808080"></div>
<div class="t" style="left:7.19px;top:212px;font-family:'Liberation Mono';font-size:13.6px;font-weight:normal;color:#000;transform:scaleX(0.905);">Lch</div>
<div class="t" style="left:8.14px;top:231px;font-family:'Liberation Mono';font-size:13.6px;font-weight:normal;color:#000;transform:scaleX(0.864);">Rch</div>
<div class="a" style="left:33px;top:211px;width:492px;height:34px;background:#000;box-shadow:inset 1px 1px #808080,inset -1px -1px #FFFFFF"></div>
<div class="a" style="left:44px;top:213px;width:474px;height:8px;border:1px solid #FF0000"></div>
<div class="a" style="left:45px;top:214px;width:375px;height:6px;background:#FFFF00"></div>
<div class="a" style="left:46px;top:215px;width:307px;height:4px;background:#00FF00"></div>
<div class="a" style="left:430px;top:213px;width:4px;height:8px;background:#FF0000"></div>
<div class="a" style="left:44px;top:235px;width:474px;height:8px;border:1px solid #FF0000"></div>
<div class="a" style="left:45px;top:236px;width:364px;height:6px;background:#FFFF00"></div>
<div class="a" style="left:46px;top:237px;width:303px;height:4px;background:#00FF00"></div>
<div class="a" style="left:434px;top:235px;width:4px;height:8px;background:#FF0000"></div>
<div class="a" style="left:45px;top:221px;width:1px;height:2px;background:#FF0000"></div>
<div class="a" style="left:45px;top:233px;width:1px;height:2px;background:#FF0000"></div>
<div class="a" style="left:84px;top:221px;width:1px;height:2px;background:#FF0000"></div>
<div class="a" style="left:84px;top:233px;width:1px;height:2px;background:#FF0000"></div>
<div class="a" style="left:123px;top:221px;width:1px;height:2px;background:#FF0000"></div>
<div class="a" style="left:123px;top:233px;width:1px;height:2px;background:#FF0000"></div>
<div class="a" style="left:162px;top:221px;width:1px;height:2px;background:#FF0000"></div>
<div class="a" style="left:162px;top:233px;width:1px;height:2px;background:#FF0000"></div>
<div class="a" style="left:201px;top:221px;width:1px;height:2px;background:#FF0000"></div>
<div class="a" style="left:201px;top:233px;width:1px;height:2px;background:#FF0000"></div>
<div class="a" style="left:240px;top:221px;width:1px;height:2px;background:#FF0000"></div>
<div class="a" style="left:240px;top:233px;width:1px;height:2px;background:#FF0000"></div>
<div class="a" style="left:279px;top:221px;width:1px;height:2px;background:#FF0000"></div>
<div class="a" style="left:279px;top:233px;width:1px;height:2px;background:#FF0000"></div>
<div class="a" style="left:318px;top:221px;width:1px;height:2px;background:#FF0000"></div>
<div class="a" style="left:318px;top:233px;width:1px;height:2px;background:#FF0000"></div>
<div class="a" style="left:357px;top:221px;width:1px;height:2px;background:#FF0000"></div>
<div class="a" style="left:357px;top:233px;width:1px;height:2px;background:#FF0000"></div>
<div class="a" style="left:396px;top:221px;width:1px;height:2px;background:#FF0000"></div>
<div class="a" style="left:396px;top:233px;width:1px;height:2px;background:#FF0000"></div>
<div class="a" style="left:435px;top:221px;width:1px;height:2px;background:#FF0000"></div>
<div class="a" style="left:435px;top:233px;width:1px;height:2px;background:#FF0000"></div>
<div class="a" style="left:474px;top:221px;width:1px;height:2px;background:#FF0000"></div>
<div class="a" style="left:474px;top:233px;width:1px;height:2px;background:#FF0000"></div>
<div class="a" style="left:513px;top:221px;width:1px;height:2px;background:#FF0000"></div>
<div class="a" style="left:513px;top:233px;width:1px;height:2px;background:#FF0000"></div>
<div class="t" style="left:32.45px;top:222px;font-family:'Liberation Mono';font-size:13.6px;font-weight:normal;color:#FF0000;transform:scaleX(0.773);">-6O</div>
<div class="t" style="left:110.45px;top:222px;font-family:'Liberation Mono';font-size:13.6px;font-weight:normal;color:#FF0000;transform:scaleX(0.773);">-5O</div>
<div class="t" style="left:188.45px;top:222px;font-family:'Liberation Mono';font-size:13.6px;font-weight:normal;color:#FF0000;transform:scaleX(0.773);">-4O</div>
<div class="t" style="left:266.36px;top:222px;font-family:'Liberation Mono';font-size:13.6px;font-weight:normal;color:#FF0000;transform:scaleX(0.818);">-3O</div>
<div class="t" style="left:344.45px;top:222px;font-family:'Liberation Mono';font-size:13.6px;font-weight:normal;color:#FF0000;transform:scaleX(0.773);">-2O</div>
<div class="t" style="left:422.45px;top:222px;font-family:'Liberation Mono';font-size:13.6px;font-weight:normal;color:#FF0000;transform:scaleX(0.773);">-1O</div>
<div class="t" style="left:505.22px;top:222px;font-family:'Liberation Mono';font-size:13.6px;font-weight:normal;color:#FF0000;transform:scaleX(0.783);">OdB</div>
<div class="t" style="left:532.23px;top:210px;font-family:'Liberation Mono';font-size:13.6px;font-weight:normal;color:#000;transform:scaleX(0.774);">Margin:</div>
<div class="a" style="left:535px;top:224px;width:28px;height:20px;box-shadow:inset 1px 1px #808080,inset -1px -1px #FFFFFF"></div>
<div class="t" style="left:539.0px;top:226px;font-family:'Liberation Sans';font-size:17px;font-weight:bold;color:#000;transform:scaleX(1.0);">7.7</div>
<div class="t" style="left:565.2px;top:231px;font-family:'Liberation Mono';font-size:13.6px;font-weight:normal;color:#000;transform:scaleX(0.8);">dB</div>
<div class="a" style="left:584px;top:223px;width:41px;height:20px;background:#D4D0C8;box-shadow:inset -1px -1px #404040,inset 1px 1px #FFFFFF,inset -2px -2px #808080"></div>
<div class="t" style="left:588.24px;top:227px;font-family:'Liberation Mono';font-size:13.6px;font-weight:normal;color:#000;transform:scaleX(0.763);">Reset</div>
<div class="a" style="left:3px;top:248px;width:625px;height:180px;background:#000;box-shadow:inset 1px 1px #808080,inset -1px -1px #FFFFFF,inset 2px 2px #404040"></div>
<svg style="left:0;top:0" width="632" height="432" shape-rendering="crispEdges"><line x1="49" y1="263.5" x2="434" y2="263.5" stroke="#A82020" stroke-dasharray="3 3"/><line x1="49" y1="294.5" x2="434" y2="294.5" stroke="#A82020" stroke-dasharray="3 3"/><line x1="49" y1="325.5" x2="434" y2="325.5" stroke="#A82020" stroke-dasharray="3 3"/><line x1="113.5" y1="260" x2="113.5" y2="328" stroke="#A82020" stroke-dasharray="3 3"/><line x1="177.5" y1="260" x2="177.5" y2="328" stroke="#A82020" stroke-dasharray="3 3"/><line x1="241.5" y1="260" x2="241.5" y2="328" stroke="#A82020" stroke-dasharray="3 3"/><line x1="305.5" y1="260" x2="305.5" y2="328" stroke="#A82020" stroke-dasharray="3 3"/><line x1="369.5" y1="260" x2="369.5" y2="328" stroke="#A82020" stroke-dasharray="3 3"/><rect x="48.5" y="259.5" width="386" height="69" fill="none" stroke="#E01818"/><line x1="49" y1="351.5" x2="434" y2="351.5" stroke="#A82020" stroke-dasharray="3 3"/><line x1="49" y1="382.5" x2="434" y2="382.5" stroke="#A82020" stroke-dasharray="3 3"/><line x1="49" y1="413.5" x2="434" y2="413.5" stroke="#A82020" stroke-dasharray="3 3"/><line x1="113.5" y1="348" x2="113.5" y2="416" stroke="#A82020" stroke-dasharray="3 3"/><line x1="177.5" y1="348" x2="177.5" y2="416" stroke="#A82020" stroke-dasharray="3 3"/><line x1="241.5" y1="348" x2="241.5" y2="416" stroke="#A82020" stroke-dasharray="3 3"/><line x1="305.5" y1="348" x2="305.5" y2="416" stroke="#A82020" stroke-dasharray="3 3"/><line x1="369.5" y1="348" x2="369.5" y2="416" stroke="#A82020" stroke-dasharray="3 3"/><rect x="48.5" y="347.5" width="386" height="69" fill="none" stroke="#E01818"/><line x1="534.5" y1="258" x2="534.5" y2="418" stroke="#A82020" stroke-dasharray="3 3"/><line x1="454" y1="338.5" x2="614" y2="338.5" stroke="#A82020" stroke-dasharray="3 3"/><rect x="453.5" y="257.5" width="161" height="161" fill="none" stroke="#E01818"/></svg>
<svg style="left:0;top:0" width="632" height="432" shape-rendering="crispEdges"><polyline points="48.8,297.3 49.3,297.6 49.8,299.6 50.3,299.0 50.8,300.9 51.4,301.3 51.9,301.4 52.4,303.2 52.9,302.9 53.4,304.1 54.0,303.5 54.5,303.8 55.0,304.9 55.5,306.1 56.0,304.7 56.6,305.2 57.1,306.4 57.6,307.5 58.2,306.9 58.7,306.7 59.2,308.3 59.7,305.8 60.3,307.3 60.8,305.6 61.3,304.9 61.9,304.5 62.4,304.6 62.9,305.5 63.5,303.6 64.0,304.2 64.5,303.7 65.0,302.5 65.6,302.3 66.1,300.6 66.6,299.9 67.2,299.7 67.7,300.2 68.2,299.0 68.7,298.2 69.2,298.2 69.8,297.3 70.3,296.3 70.8,297.4 71.3,297.2 71.9,296.0 72.4,296.7 72.9,296.6 73.4,297.4 74.0,296.9 74.5,295.8 75.0,297.4 75.5,295.3 76.1,296.0 76.6,296.7 77.1,295.3 77.7,296.1 78.2,295.0 78.7,296.5 79.3,296.7 79.8,296.2 80.3,296.9 80.9,295.6 81.4,296.5 81.9,296.8 82.4,297.4 82.9,297.7 83.5,299.3 84.0,300.1 84.5,299.6 85.0,300.7 85.5,299.8 86.0,300.6 86.6,299.7 87.1,299.7 87.7,298.5 88.2,296.4 88.7,295.9 89.3,295.8 89.8,293.4 90.4,293.7 90.9,292.2 91.4,291.4 92.0,290.6 92.5,291.6 93.0,289.4 93.5,289.0 94.1,288.7 94.6,289.1 95.1,286.6 95.6,286.8 96.2,286.3 96.7,286.4 97.2,285.6 97.7,285.0 98.3,282.9 98.8,282.6 99.3,282.7 99.8,284.2 100.4,284.6 100.9,282.9 101.4,283.2 101.9,283.6 102.5,283.9 103.0,284.7 103.5,285.2 104.0,285.1 104.6,285.2 105.1,286.9 105.6,287.5 106.2,288.7 106.7,290.3 107.2,289.5 107.8,289.0 108.3,289.1 108.8,289.2 109.4,287.6 109.9,289.5 110.4,289.1 111.0,289.2 111.5,288.9 112.0,286.9 112.5,285.8 113.1,284.1 113.6,284.3 114.1,281.9 114.6,280.8 115.2,280.1 115.7,278.9 116.2,278.3 116.7,276.9 117.2,276.1 117.8,275.8 118.3,275.0 118.8,275.0 119.3,273.5 119.8,274.8 120.4,273.5 120.9,271.7 121.4,271.3 121.9,270.9 122.5,270.2 123.0,269.0 123.5,270.0 124.0,271.2 124.6,270.7 125.2,271.6 125.7,271.4 126.2,272.2 126.8,273.6 127.4,274.2 127.9,276.4 128.4,275.8 128.9,276.5 129.5,279.7 130.0,279.7 130.5,279.8 131.0,281.7 131.5,281.5 132.0,283.7 132.6,285.7 133.1,286.5 133.6,287.1 134.1,286.3 134.7,286.9 135.2,286.8 135.7,288.5 136.2,288.3 136.8,289.2 137.3,288.4 137.8,288.5 138.3,290.2 138.8,290.9 139.4,290.9 139.9,291.1 140.4,291.2 141.0,291.0 141.5,289.7 142.0,290.4 142.6,290.1 143.1,289.3 143.6,289.3 144.2,289.9 144.7,289.8 145.2,290.9 145.8,291.5 146.3,290.3 146.8,291.2 147.4,291.1 147.9,290.7 148.4,289.0 148.9,288.4 149.4,288.2 150.0,287.9 150.5,287.6 151.0,288.4 151.6,288.8 152.1,288.4 152.6,287.3 153.1,288.3 153.6,289.3 154.2,288.2 154.7,290.2 155.2,291.5 155.7,291.8 156.3,292.3 156.8,292.3 157.3,292.2 157.8,294.1 158.3,293.4 158.8,294.9 159.3,295.7 159.8,294.7 160.3,295.1 160.8,296.8 161.3,296.7 161.8,295.8 162.3,296.0 162.8,296.5 163.3,298.7 163.8,298.9 164.3,297.7 164.8,299.7 165.3,300.5 165.8,300.7 166.3,300.9 166.9,302.4 167.4,302.4 167.9,303.1 168.4,306.4 169.0,306.6 169.5,307.3 170.0,309.2 170.5,307.8 171.0,308.5 171.6,308.1 172.1,306.4 172.6,306.2 173.1,306.0 173.7,305.6 174.2,306.1 174.7,305.0 175.2,305.1 175.8,304.0 176.3,305.6 176.8,303.9 177.4,303.8 177.9,303.7 178.4,304.2 179.0,302.7 179.5,303.5 180.0,303.0 180.5,303.6 181.1,304.1 181.6,303.4 182.1,305.0 182.6,304.9 183.2,305.0 183.7,307.4 184.2,306.4 184.7,307.7 185.3,308.8 185.8,308.9 186.3,308.9 186.9,309.9 187.4,310.5 187.9,311.6 188.5,310.5 189.0,312.1 189.5,311.8 190.1,312.4 190.6,314.2 191.1,313.6 191.6,313.8 192.2,314.4 192.7,314.9 193.2,313.8 193.7,314.3 194.2,314.1 194.7,314.3 195.3,314.8 195.8,314.3 196.3,314.6 196.8,313.4 197.4,313.5 197.9,311.8 198.4,311.2 198.9,310.3 199.5,307.7 200.0,307.3 200.5,307.0 201.1,305.4 201.6,302.5 202.1,301.1 202.6,300.6 203.2,298.4 203.7,297.5 204.2,295.8 204.7,296.0 205.3,295.0 205.8,294.0 206.3,292.5 206.9,294.1 207.4,294.3 207.9,293.4 208.4,295.5 209.0,296.0 209.5,294.5 210.0,296.6 210.6,295.5 211.1,296.1 211.6,297.4 212.2,297.2 212.7,295.7 213.2,296.5 213.8,296.8 214.3,296.5 214.8,296.3 215.4,296.7 215.9,297.8 216.4,296.3 217.0,297.7 217.5,297.6 218.0,296.2 218.6,296.7 219.1,297.1 219.6,296.5 220.1,295.1 220.7,297.0 221.2,296.2 221.7,296.3 222.2,293.9 222.8,294.0 223.3,293.1 223.8,294.6 224.3,293.1 224.9,292.4 225.4,292.8 225.9,293.2 226.4,292.2 227.0,290.1 227.5,289.0 228.0,290.1 228.5,288.5 229.0,288.0 229.5,285.8 230.1,284.9 230.6,285.6 231.1,284.2 231.6,282.6 232.1,283.9 232.6,282.4 233.2,282.0 233.7,279.5 234.2,280.6 234.7,278.9 235.3,281.0 235.8,280.2 236.4,280.2 236.9,280.9 237.4,282.0 238.0,280.7 238.5,280.6 239.1,281.7 239.6,281.3 240.1,281.1 240.6,281.4 241.1,281.3 241.7,281.9 242.2,282.3 242.7,282.4 243.2,283.7 243.7,282.7 244.2,283.4 244.8,282.8 245.3,283.4 245.8,282.8 246.3,283.5 246.8,283.6 247.4,286.0 247.9,286.3 248.4,286.1 249.0,287.5 249.5,289.2 250.0,287.9 250.6,290.3 251.1,290.1 251.6,290.9 252.2,292.4 252.7,292.0 253.2,291.8 253.8,291.7 254.3,291.8 254.8,289.7 255.3,290.4 255.9,289.5 256.4,288.8 256.9,287.7 257.4,287.0 258.0,285.8 258.5,285.4 259.0,284.7 259.5,285.8 260.1,284.1 260.6,283.3 261.1,283.8 261.7,286.3 262.2,287.1 262.7,287.3 263.2,287.1 263.8,287.7 264.3,288.5 264.8,289.6 265.3,289.6 265.9,291.0 266.4,291.2 266.9,293.6 267.4,294.3 268.0,294.0 268.5,294.0 269.0,296.0 269.5,294.8 270.0,295.2 270.5,294.7 271.0,295.9 271.5,296.4 272.0,296.8 272.5,296.4 273.0,297.4 273.6,296.6 274.1,297.5 274.6,297.4 275.1,298.5 275.6,297.9 276.1,298.2 276.6,299.2 277.1,299.3 277.6,300.5 278.1,300.7 278.6,301.5 279.1,300.3 279.6,299.4 280.1,298.8 280.6,296.7 281.2,295.5 281.7,296.1 282.2,293.1 282.7,293.5 283.2,292.7 283.8,290.6 284.3,291.8 284.8,291.3 285.3,290.0 285.9,289.6 286.4,289.1 286.9,286.8 287.4,287.1 287.9,286.3 288.5,286.5 289.0,285.7 289.5,286.3 290.1,286.1 290.6,287.3 291.1,287.3 291.7,287.8 292.2,287.2 292.7,287.1 293.3,287.9 293.8,288.9 294.3,288.9 294.8,291.2 295.4,291.1 295.9,291.9 296.4,292.5 296.9,293.2 297.5,293.4 298.0,292.8 298.5,295.3 299.0,295.3 299.5,294.8 300.0,295.0 300.5,295.4 301.0,294.0 301.5,295.7 302.0,294.7 302.5,294.3 303.0,294.9 303.5,296.1 304.0,294.9 304.5,296.3 305.0,297.0 305.5,295.9 306.0,295.7 306.5,296.0 307.0,296.3 307.5,296.3 308.0,295.7 308.5,295.6 309.0,294.0 309.5,294.0 310.0,294.0 310.5,295.0 311.0,293.7 311.5,294.1 312.0,292.6 312.5,292.5 313.0,292.7 313.5,293.5 314.0,293.3 314.5,293.1 315.0,291.9 315.5,292.3 316.0,291.9 316.5,292.3 317.1,291.8 317.6,294.0 318.1,292.6 318.6,294.9 319.1,295.1 319.7,293.2 320.2,294.6 320.7,295.8 321.2,296.5 321.8,295.6 322.3,295.5 322.8,295.5 323.4,297.4 323.9,295.7 324.4,296.7 324.9,295.8 325.5,296.8 326.0,297.9 326.5,296.1 327.0,297.8 327.6,297.2 328.1,298.2 328.6,297.9 329.1,296.8 329.7,298.5 330.2,297.7 330.7,297.3 331.3,297.9 331.8,299.8 332.3,300.4 332.9,300.7 333.4,301.0 333.9,302.2 334.5,302.9 335.0,304.8 335.5,302.0 336.0,303.1 336.6,302.5 337.1,300.1 337.6,301.2 338.1,300.0 338.7,299.7 339.2,297.5 339.7,296.9 340.2,296.2 340.7,296.9 341.3,295.1 341.8,293.8 342.3,293.2 342.8,292.1 343.4,290.8 343.9,290.2 344.4,291.2 344.9,290.2 345.5,292.0 346.0,290.7 346.5,291.0 347.1,291.9 347.6,291.4 348.1,292.1 348.7,293.8 349.2,293.9 349.7,293.8 350.2,293.4 350.7,294.2 351.2,294.3 351.7,293.4 352.2,293.9 352.7,292.4 353.2,294.1 353.7,293.5 354.2,294.2 354.7,294.1 355.2,293.3 355.8,292.7 356.3,294.9 356.8,293.1 357.3,294.0 357.8,293.7 358.3,293.7 358.8,294.8 359.3,295.4 359.8,293.8 360.3,294.8 360.8,294.0 361.3,294.7 361.8,294.3 362.3,293.2 362.9,292.5 363.4,292.0 363.9,293.0 364.4,291.4 365.0,290.1 365.5,291.1 366.0,290.7 366.5,288.7 367.1,287.3 367.6,286.8 368.1,285.9 368.6,285.9 369.2,284.7 369.7,284.4 370.2,285.2 370.7,286.7 371.2,288.2 371.7,288.6 372.2,288.6 372.7,289.3 373.2,290.3 373.7,290.7 374.2,291.4 374.7,291.5 375.2,292.7 375.7,295.2 376.2,293.9 376.7,295.5 377.2,296.6 377.7,297.9 378.2,297.1 378.7,298.0 379.2,298.7 379.7,299.5 380.2,300.0 380.7,301.6 381.2,301.8 381.7,302.3 382.2,300.6 382.7,301.1 383.2,303.1 383.7,304.0 384.2,303.4 384.7,304.1 385.2,303.1 385.7,304.4 386.2,306.1 386.7,306.3 387.2,306.8 387.7,307.5 388.2,306.2 388.7,306.3 389.2,305.9 389.7,306.3 390.2,306.1 390.7,306.3 391.2,305.2 391.7,304.6 392.2,304.3 392.7,303.1 393.2,302.8 393.7,301.1 394.2,302.4 394.7,300.6 395.2,301.7 395.7,300.5 396.2,299.2 396.7,298.3 397.2,298.1 397.7,298.5 398.2,298.2 398.7,296.8 399.3,296.7 399.8,297.8 400.3,297.9 400.8,297.4 401.4,297.0 401.9,297.9 402.4,296.5 402.9,297.2 403.5,297.6 404.0,298.8 404.5,298.0 405.0,298.6 405.6,297.6 406.1,297.1 406.6,296.9 407.2,298.5 407.7,297.8 408.2,296.7 408.7,295.8 409.3,296.8 409.8,297.1 410.3,296.3 410.8,295.8 411.4,296.6 411.9,297.1 412.4,295.3 412.9,294.7 413.5,295.3 414.0,295.3 414.5,295.9 415.1,294.6 415.6,296.0 416.1,295.8 416.7,295.1 417.2,294.3 417.7,296.1 418.3,294.4 418.8,295.6 419.3,294.1 419.9,294.0 420.4,295.2 420.9,293.3 421.4,294.1 422.0,292.2 422.5,290.6 423.0,289.9 423.5,289.6 424.1,289.4 424.6,289.3 425.1,286.6 425.6,286.3 426.2,285.1 426.7,286.1 427.2,284.3 427.7,284.2 428.2,284.3 428.7,285.2 429.2,286.5 429.7,286.6 430.2,286.4 430.7,287.1 431.2,287.1 431.7,285.7 432.2,285.5 432.7,287.4 433.2,287.1 433.7,285.5" fill="none" stroke="#00FF00" stroke-width="1" stroke-linejoin="round"/><polyline points="48.8,385.2 49.3,385.0 49.8,385.5 50.4,386.0 50.9,386.1 51.4,386.2 51.9,387.4 52.4,388.1 52.9,390.0 53.5,388.6 54.0,391.1 54.5,389.8 55.0,390.5 55.5,391.9 56.1,392.2 56.6,391.6 57.1,391.0 57.6,392.3 58.2,392.4 58.7,394.0 59.2,392.6 59.8,393.3 60.3,394.9 60.8,393.2 61.3,394.0 61.9,394.8 62.4,394.6 62.9,392.8 63.5,392.6 64.0,392.6 64.5,394.5 65.1,392.9 65.6,393.9 66.1,394.2 66.7,392.7 67.2,392.5 67.7,393.8 68.3,392.7 68.8,391.6 69.3,392.4 69.8,391.2 70.4,390.8 70.9,389.9 71.4,391.4 71.9,391.5 72.5,390.6 73.0,391.1 73.5,388.6 74.0,388.8 74.6,389.1 75.1,390.0 75.6,389.4 76.1,387.4 76.7,386.5 77.2,386.3 77.7,385.9 78.2,386.3 78.8,383.9 79.3,384.8 79.8,384.1 80.3,384.6 80.8,384.9 81.4,384.9 81.9,384.6 82.4,384.9 82.9,385.4 83.5,386.8 84.0,385.5 84.5,386.1 85.0,387.9 85.6,387.0 86.1,387.0 86.6,386.3 87.2,387.1 87.7,386.0 88.2,387.0 88.8,386.3 89.3,386.0 89.8,383.7 90.4,382.7 90.9,382.2 91.4,382.7 92.0,382.6 92.5,381.5 93.0,380.0 93.5,379.5 94.1,379.0 94.6,378.2 95.1,377.4 95.6,376.7 96.2,375.3 96.7,373.0 97.2,373.8 97.7,372.7 98.3,373.6 98.8,373.3 99.3,374.4 99.8,373.3 100.4,373.7 100.9,373.9 101.4,373.9 101.9,375.8 102.5,375.3 103.0,374.9 103.5,375.3 104.0,377.0 104.6,376.0 105.1,375.6 105.6,376.7 106.1,376.1 106.6,376.6 107.1,374.3 107.6,374.9 108.1,375.5 108.6,375.3 109.1,375.2 109.6,372.9 110.1,373.2 110.6,372.6 111.1,372.5 111.6,374.1 112.1,372.9 112.6,373.5 113.1,371.9 113.6,372.9 114.1,371.6 114.6,370.9 115.1,371.5 115.6,371.3 116.2,368.6 116.7,369.1 117.2,368.5 117.7,366.9 118.3,366.6 118.8,365.4 119.3,364.9 119.8,364.4 120.4,364.6 120.9,364.0 121.4,362.3 121.9,361.2 122.5,361.3 123.0,361.5 123.5,359.6 124.0,360.9 124.6,361.6 125.1,364.0 125.7,364.3 126.2,364.1 126.7,365.1 127.3,366.8 127.8,368.1 128.4,369.3 128.9,368.9 129.4,369.2 130.0,370.5 130.5,369.9 131.0,369.6 131.5,369.7 132.1,371.3 132.6,369.9 133.1,370.5 133.6,370.1 134.2,370.3 134.7,371.4 135.2,371.8 135.7,370.4 136.3,370.0 136.8,371.3 137.3,370.4 137.9,370.1 138.4,372.6 138.9,371.7 139.4,372.9 139.9,372.2 140.5,373.6 141.0,372.8 141.5,372.4 142.1,372.3 142.6,373.9 143.1,374.3 143.6,375.0 144.1,373.1 144.6,374.4 145.1,373.8 145.6,374.2 146.1,373.3 146.6,373.7 147.1,374.3 147.6,375.3 148.1,373.4 148.6,374.3 149.1,375.1 149.6,375.5 150.1,373.7 150.6,373.6 151.1,375.6 151.6,375.7 152.1,374.5 152.6,373.5 153.1,376.5 153.6,376.1 154.2,378.2 154.7,378.4 155.2,379.8 155.7,379.1 156.3,381.5 156.8,381.0 157.3,382.4 157.8,383.6 158.4,383.6 158.9,382.2 159.4,382.4 160.0,383.0 160.5,383.4 161.0,383.2 161.6,382.7 162.1,383.1 162.6,384.4 163.2,384.9 163.7,383.0 164.2,385.4 164.8,386.9 165.3,386.3 165.8,389.3 166.3,388.7 166.8,391.0 167.4,392.0 167.9,393.3 168.4,393.6 168.9,395.0 169.5,396.5 170.0,397.2 170.5,397.4 171.0,396.4 171.6,396.0 172.1,394.6 172.6,395.6 173.1,394.8 173.7,393.8 174.2,394.7 174.7,394.3 175.2,393.0 175.8,391.8 176.3,392.0 176.8,390.6 177.4,390.1 177.9,390.3 178.4,389.0 179.0,389.3 179.5,388.9 180.0,388.3 180.6,390.3 181.1,389.5 181.6,391.6 182.1,392.2 182.7,392.1 183.2,391.5 183.7,393.1 184.2,393.3 184.8,395.2 185.3,393.8 185.8,396.1 186.3,396.7 186.8,396.4 187.3,397.0 187.8,395.8 188.3,398.0 188.8,397.2 189.3,398.6 189.8,398.9 190.3,397.4 190.8,399.2 191.3,399.9 191.8,398.1 192.3,399.2 192.8,400.5 193.3,399.4 193.8,401.5 194.3,400.3 194.8,401.9 195.3,400.6 195.8,400.7 196.3,400.9 196.8,398.5 197.3,397.8 197.8,397.6 198.3,396.4 198.8,394.9 199.3,394.5 199.8,393.7 200.3,394.8 200.8,393.4 201.3,393.1 201.8,390.6 202.3,391.3 202.8,388.9 203.3,389.1 203.8,388.6 204.3,387.1 204.8,387.6 205.3,386.9 205.9,387.0 206.4,387.8 206.9,386.0 207.5,388.2 208.0,387.4 208.5,386.9 209.1,387.9 209.6,386.7 210.1,388.2 210.7,386.9 211.2,386.0 211.7,386.7 212.2,385.6 212.8,384.6 213.3,385.7 213.8,383.7 214.3,385.2 214.9,383.6 215.4,384.2 215.9,384.7 216.4,383.4 217.0,383.3 217.5,382.2 218.0,381.6 218.5,381.8 219.1,382.3 219.6,383.5 220.1,383.3 220.6,383.6 221.2,384.7 221.7,383.1 222.2,383.4 222.7,384.1 223.2,382.2 223.8,381.7 224.3,382.2 224.8,381.2 225.3,381.4 225.9,380.7 226.4,381.2 226.9,380.8 227.4,379.5 228.0,380.1 228.5,379.3 229.0,378.0 229.6,379.4 230.1,377.2 230.6,376.4 231.2,375.8 231.7,376.5 232.2,376.6 232.8,375.8 233.3,374.4 233.8,373.5 234.4,372.4 234.9,373.3 235.4,373.3 235.9,373.0 236.5,373.9 237.0,373.6 237.5,374.9 238.0,374.6 238.6,373.6 239.1,375.4 239.6,373.5 240.1,374.4 240.6,373.8 241.1,373.0 241.6,372.3 242.1,373.7 242.7,371.6 243.2,372.6 243.7,373.2 244.2,371.0 244.7,370.8 245.2,372.4 245.8,372.8 246.3,373.8 246.8,374.9 247.4,374.0 247.9,375.0 248.4,375.6 249.0,375.7 249.5,378.4 250.0,378.8 250.6,379.3 251.1,378.2 251.6,379.8 252.2,379.1 252.7,378.0 253.2,378.3 253.7,377.2 254.3,376.2 254.8,375.5 255.3,375.3 255.8,374.5 256.4,374.7 256.9,375.3 257.4,374.7 257.9,374.7 258.5,373.9 259.0,372.4 259.5,373.3 260.0,373.2 260.6,374.2 261.1,373.8 261.6,373.3 262.1,374.4 262.7,375.4 263.2,373.7 263.7,375.5 264.2,374.2 264.8,375.6 265.3,376.3 265.8,378.4 266.4,379.6 266.9,379.9 267.4,379.7 268.0,381.8 268.5,381.3 269.0,381.9 269.6,384.3 270.1,384.4 270.6,384.8 271.2,385.0 271.7,386.0 272.2,385.1 272.7,386.2 273.3,386.1 273.8,386.8 274.3,386.0 274.8,387.0 275.4,386.9 275.9,386.5 276.4,386.5 276.9,387.8 277.5,386.7 278.0,389.0 278.5,386.4 279.0,385.5 279.5,384.9 280.0,386.2 280.5,384.1 281.0,382.9 281.5,381.9 282.0,381.3 282.5,382.1 283.0,381.3 283.5,380.7 284.0,380.1 284.5,377.8 285.0,378.3 285.5,377.1 286.0,377.5 286.5,376.8 287.0,376.2 287.5,373.6 288.0,375.6 288.6,375.8 289.1,376.0 289.6,374.1 290.1,374.4 290.7,374.3 291.2,374.2 291.7,376.3 292.2,376.3 292.8,376.0 293.3,376.6 293.8,376.2 294.3,375.5 294.9,375.1 295.4,375.2 295.9,376.8 296.4,375.5 297.0,375.8 297.5,376.0 298.0,375.1 298.5,375.6 299.1,375.7 299.6,376.7 300.1,375.9 300.6,375.8 301.2,377.3 301.7,376.2 302.2,377.6 302.8,377.6 303.3,376.7 303.8,378.1 304.4,378.7 304.9,380.1 305.4,379.6 306.0,381.0 306.5,381.1 307.0,380.2 307.6,381.7 308.1,379.7 308.6,381.3 309.1,379.7 309.7,379.2 310.2,379.5 310.7,380.8 311.2,381.2 311.8,378.7 312.3,379.8 312.8,379.7 313.3,380.3 313.9,378.7 314.4,379.4 314.9,379.2 315.4,380.6 315.9,379.4 316.4,381.2 316.9,379.8 317.4,379.8 317.9,381.2 318.4,380.9 318.9,380.1 319.4,381.6 319.9,380.4 320.4,382.3 320.9,382.3 321.4,382.7 321.9,382.5 322.4,382.0 322.9,382.3 323.4,382.5 323.9,383.9 324.4,382.1 324.9,384.2 325.4,382.4 325.9,383.4 326.4,384.0 327.0,386.1 327.5,385.7 328.0,386.0 328.5,387.8 329.1,386.8 329.6,387.9 330.1,388.6 330.6,389.7 331.2,390.3 331.7,390.6 332.2,390.4 332.7,390.9 333.3,391.1 333.8,393.3 334.3,393.4 334.8,392.8 335.3,390.7 335.8,390.6 336.3,390.7 336.8,389.5 337.3,387.6 337.8,387.7 338.3,388.0 338.8,385.7 339.3,384.8 339.8,384.4 340.3,384.6 340.8,384.2 341.3,381.8 341.8,381.5 342.4,381.5 342.9,381.4 343.4,381.6 343.9,380.5 344.5,380.6 345.0,380.0 345.5,381.6 346.0,380.7 346.6,379.0 347.1,380.8 347.6,378.4 348.1,379.0 348.7,380.3 349.2,379.7 349.7,379.4 350.2,378.6 350.8,377.9 351.3,378.8 351.8,377.4 352.3,377.5 352.8,377.8 353.4,376.8 353.9,377.6 354.4,378.8 355.0,378.9 355.5,378.8 356.0,379.4 356.6,379.3 357.1,378.8 357.6,380.3 358.2,380.1 358.7,381.2 359.2,381.9 359.8,381.1 360.3,381.8 360.8,381.9 361.4,380.8 361.9,380.1 362.4,381.0 362.9,381.0 363.5,380.5 364.0,380.0 364.5,380.1 365.0,379.4 365.6,379.0 366.1,378.3 366.6,377.6 367.1,378.1 367.7,376.5 368.2,377.0 368.7,378.2 369.2,378.4 369.7,378.5 370.2,378.0 370.7,378.7 371.2,379.2 371.7,379.9 372.2,379.7 372.7,380.7 373.2,381.7 373.7,380.2 374.2,381.7 374.7,382.4 375.2,381.8 375.7,382.4 376.2,383.9 376.7,382.0 377.2,383.5 377.7,382.9 378.2,384.8 378.7,385.5 379.2,384.8 379.7,384.4 380.2,386.2 380.7,386.7 381.2,387.7 381.7,387.8 382.2,388.7 382.7,389.8 383.2,389.7 383.7,390.0 384.2,391.9 384.7,390.7 385.2,392.4 385.7,392.3 386.2,393.8 386.7,392.9 387.2,395.6 387.7,394.7 388.2,394.5 388.7,395.7 389.2,395.7 389.8,394.5 390.3,395.2 390.8,394.9 391.3,395.3 391.9,394.2 392.4,393.7 392.9,393.3 393.4,394.3 394.0,394.5 394.5,393.2 395.0,392.2 395.5,393.3 396.1,392.0 396.6,391.3 397.1,391.3 397.7,393.0 398.2,393.3 398.7,393.1 399.3,392.9 399.8,393.3 400.3,392.7 400.9,394.6 401.4,393.4 401.9,394.2 402.5,394.9 403.0,395.1 403.5,393.9 404.1,393.1 404.6,393.3 405.1,392.0 405.6,393.3 406.2,391.8 406.7,392.6 407.2,390.9 407.7,390.8 408.3,390.1 408.8,390.2 409.3,389.2 409.8,388.4 410.4,389.8 410.9,388.4 411.4,388.0 411.9,387.9 412.5,388.1 413.0,387.7 413.5,387.9 414.0,387.7 414.6,386.7 415.1,387.8 415.6,387.4 416.1,385.2 416.7,386.8 417.2,386.7 417.7,385.6 418.3,383.4 418.8,384.3 419.3,383.1 419.8,380.8 420.4,380.1 420.9,381.6 421.4,380.2 421.9,378.4 422.5,377.3 423.0,376.7 423.5,376.2 424.0,376.7 424.6,375.0 425.1,373.8 425.6,375.5 426.2,375.2 426.7,373.6 427.2,375.3 427.8,374.5 428.3,374.9 428.8,374.5 429.4,375.0 429.9,374.7 430.4,375.1 431.0,373.9 431.5,375.4 432.1,375.3 432.6,376.2 433.2,375.7 433.7,377.1" fill="none" stroke="#00FF00" stroke-width="1" stroke-linejoin="round"/><polyline points="526.3,344.1 523.7,344.4 521.5,349.1 521.3,349.1 521.4,348.9 515.9,353.2 515.2,356.9 514.9,357.4 509.4,354.6 511.4,359.2 513.9,361.0 512.9,359.8 511.4,358.1 508.8,361.9 507.8,363.5 507.1,365.1 507.2,363.9 506.9,367.8 507.7,369.3 508.1,371.6 504.3,367.3 508.2,368.7 509.9,371.5 506.6,370.0 510.0,367.1 507.1,366.6 506.4,372.2 512.6,368.7 510.8,370.4 513.5,369.9 516.7,373.7 514.2,372.0 516.0,370.3 516.5,368.4 519.5,368.5 522.4,368.7 520.8,363.4 522.5,362.3 523.5,364.4 524.3,364.8 524.9,361.5 526.3,362.2 529.0,364.6 526.0,364.3 526.2,361.1 531.0,361.6 530.5,360.0 530.8,361.3 530.2,357.3 528.0,356.4 526.9,355.8 526.1,356.6 527.6,352.9 529.2,348.6 530.1,350.9 528.8,348.2 528.3,346.1 530.5,341.8 528.8,344.0 530.1,341.3 530.4,342.6 526.9,343.5 530.7,345.2 528.1,348.1 525.8,348.5 529.3,348.2 524.2,348.8 521.0,351.6 520.1,351.1 518.2,349.3 520.3,352.0 520.5,354.2 522.7,351.2 526.0,349.9 523.7,349.1 525.8,349.4 528.8,346.2 531.7,346.4 533.3,342.9 532.9,343.2 537.6,341.7 538.7,338.8 538.8,337.5 541.9,336.7 540.8,335.5 540.4,329.5 540.7,329.2 542.2,326.2 546.6,323.1 549.5,319.8 551.8,317.6 552.3,315.2 553.6,312.0 555.4,314.1 556.0,313.8 558.7,314.7 556.9,316.5 556.3,315.8 555.1,316.0 551.5,316.3 555.3,317.2 554.2,316.1 550.2,317.5 552.3,319.4 550.5,318.8 550.9,321.8 551.2,322.7 549.5,324.0 551.8,322.0 545.7,322.5 541.4,320.5 544.4,317.2 542.7,317.0 544.0,314.4 544.4,314.2 544.2,313.2 545.4,313.9 543.5,313.8 545.5,315.2 546.3,316.6 546.9,313.9 549.3,315.1 550.2,314.5 554.4,312.3 558.8,309.1 561.5,308.6 564.2,308.3 564.3,304.1 565.9,303.5 565.9,301.5 566.5,301.4 570.2,300.1 571.3,297.8 571.4,295.9 571.3,294.9 574.5,293.9 577.5,288.8 576.5,287.7 581.2,288.3 583.1,285.7 582.7,283.2 586.7,282.2 587.3,283.0 588.0,279.5 584.7,281.5 576.8,283.2 577.6,285.2 573.7,288.8 570.8,288.0 574.1,290.8 571.6,294.3 570.7,300.3 568.8,300.1 565.5,303.6 565.9,307.6 563.3,307.5 561.1,306.0 558.0,304.5 554.7,306.8 554.1,305.1 551.0,304.3 549.6,302.8 548.6,304.1 546.0,306.7 544.9,306.0 542.3,304.8 544.8,307.6 547.2,309.9 544.7,308.0 544.5,305.3 544.5,309.3 542.9,309.5 540.9,308.2 542.3,307.5 544.0,309.6 540.7,312.7 541.4,311.7 541.2,313.3 540.7,312.8 542.5,318.7 537.8,317.1 538.8,315.3 539.5,315.5 535.4,318.7 541.6,317.1 543.7,313.1 543.3,315.9 547.1,316.6 543.8,316.1 543.8,313.4 545.8,314.7 544.2,316.1 544.8,316.9 544.1,314.9 544.4,315.3 544.0,318.3 544.2,320.6 547.6,316.3 545.6,317.9 544.2,320.0 542.6,322.8 542.0,320.4 545.0,323.0 542.1,327.6 540.6,327.9 541.0,330.3 534.9,330.1 531.5,337.3 532.4,339.0 532.6,340.5 530.7,337.6 530.4,342.1 530.5,343.7 528.2,340.6 529.6,339.9 528.2,342.3 526.8,344.3 528.9,340.8 523.5,341.7 524.3,343.4 528.0,345.0 523.8,346.3 526.2,348.5 522.4,351.1 515.0,357.0 515.8,357.1 511.6,359.2 509.0,362.0 510.0,370.2 507.2,370.1 504.5,372.9 501.7,378.5 505.0,382.9 506.8,381.0 506.3,376.3 508.3,378.0 507.7,373.8 509.4,374.6 509.8,368.8 508.3,369.7 512.1,369.7 508.7,370.5 504.5,367.1 508.3,366.8 509.3,369.2 510.5,366.0 514.6,362.4 516.6,360.6 516.2,360.1 517.3,356.1 516.5,353.9 513.9,354.7 515.2,358.6 511.8,360.0 507.3,363.7 510.2,362.8 506.5,369.1 505.8,369.2 507.8,370.1 501.2,368.7 502.2,372.0 501.8,372.4 497.5,370.1 502.5,373.4 502.6,372.9 499.0,376.9 497.9,375.4 496.4,380.0 495.7,378.9 492.9,382.9 493.3,382.3 493.6,382.3 491.2,383.2 491.7,384.9 489.9,384.4 491.9,384.2 492.3,386.9 486.8,387.8 489.5,388.1 490.3,389.1 488.2,391.1 493.2,389.7 497.0,389.6 497.5,384.9 499.4,384.6 499.9,380.1 499.8,381.9 503.4,376.9 506.1,377.3 505.2,375.8 510.0,373.4 513.0,371.7 513.3,368.3 520.8,367.6 522.2,360.9 524.4,362.0 530.3,356.5 528.0,355.3 534.1,351.9 540.9,352.6 535.5,349.0 535.5,350.4 534.0,351.7 530.4,352.3 529.0,352.2 529.4,353.0 532.0,352.2 530.1,352.2 529.5,353.4 529.5,351.5 528.5,350.7 530.8,349.3 527.7,351.3 527.5,345.3 529.6,347.9 524.7,345.5 527.3,347.0 530.3,343.1 527.3,344.5 528.2,344.0 526.0,343.1 522.3,343.7 524.6,339.9 526.7,341.9 526.1,339.6 528.3,340.9 530.8,336.8 527.9,340.8 530.0,341.0 533.0,340.4 531.8,339.8 535.0,343.6 532.9,344.2 532.3,344.5 537.9,342.5 534.2,342.4 534.8,341.1 539.1,339.1 535.7,335.9 536.5,333.4 539.7,336.4 543.9,332.2 547.3,332.1 548.4,330.3 551.7,335.9 551.2,330.8 552.4,330.5 554.4,329.1 554.0,329.0 558.4,326.0 557.2,321.4 557.2,320.8 563.3,318.3 562.9,319.4 563.8,313.5 564.6,314.0 559.7,314.6 560.7,314.9 561.4,311.2 559.6,313.3 561.6,315.8 563.1,316.0 559.4,312.8 556.8,315.3 558.8,316.7 557.5,318.6 557.8,317.6 558.8,316.3 556.2,318.3 558.6,317.2 556.4,315.4 554.0,309.0 558.7,313.3 554.6,309.6 551.4,307.5 553.6,303.6 552.9,308.2 553.8,310.6 553.3,311.3 552.8,314.9 550.9,318.0 545.9,322.9 545.3,321.6 542.7,322.3 542.3,322.9 542.6,327.2 537.5,325.1 538.6,324.3 537.3,327.9 537.1,330.5 541.8,326.2 540.1,325.4 541.1,326.1 543.9,328.0 541.6,323.9 545.6,322.1 549.6,320.8 548.0,320.3 547.2,319.5 548.8,313.8 549.7,315.4 550.1,315.0 554.0,316.5 556.1,309.9 554.4,314.3 552.3,316.5 547.9,316.0 549.5,313.8 547.5,314.7 542.2,317.4 543.7,315.7 541.2,315.8 539.6,314.9 541.3,319.7 540.0,322.2 540.0,322.5 536.0,323.5 532.6,329.1 531.5,331.2 529.7,331.2 532.2,332.4 530.2,339.3 528.3,339.7 529.9,341.6 526.0,343.4 526.8,346.1 527.6,346.8 525.9,345.5 527.7,346.0 523.8,345.1 523.8,349.2 527.4,345.6 523.6,346.4 522.4,347.9 522.1,351.6 519.3,349.9 517.5,350.4 518.1,354.4 520.7,354.7 522.8,355.0 523.9,352.2 524.7,351.3 526.6,349.4 529.3,347.2 529.3,344.0 533.8,341.8 536.6,341.6 535.6,339.0 539.8,334.0 541.1,334.0 543.2,332.1 545.4,329.9 542.8,325.7 544.2,326.8 544.5,324.9 546.4,323.2 550.2,322.6 549.7,320.1 553.5,320.1 551.2,319.1 547.4,319.6 550.3,316.7 549.6,318.5 549.9,317.6 548.5,315.7 545.6,317.0 547.6,318.3 543.4,319.5 540.7,319.5 542.0,322.4 537.3,322.8 534.7,322.5 534.3,323.6 535.3,321.9 536.9,321.1 535.0,320.4 534.2,320.0 533.5,319.1 531.5,319.6 531.0,321.9 531.9,320.7 533.1,323.2 531.0,323.4 530.9,323.3 530.4,322.8 529.0,322.8 531.5,323.3 528.9,322.0 527.7,325.6 529.2,325.8 526.9,327.2 529.4,329.4 530.3,332.2 531.3,334.3 533.3,335.3 528.8,336.2 530.3,334.1 533.1,334.9 531.8,333.8 534.0,331.7 533.6,332.0 533.9,332.8 532.3,333.0 529.9,330.5 534.4,333.2 533.4,333.3 532.2,331.6 535.5,330.7 535.6,330.1 539.2,330.2 540.8,329.3 540.7,329.9 541.2,329.8 536.4,332.4 533.6,334.8 533.8,333.3 532.9,335.2 532.6,337.6 531.8,337.9 530.2,334.9 528.4,335.4 529.9,337.3 529.6,334.8 528.2,335.2 532.0,334.5 529.9,337.9 528.4,338.5 531.3,339.5 529.8,339.8 530.4,342.3 527.4,345.4 523.9,341.9 526.5,343.5 523.8,346.2 524.4,348.5 528.1,345.9 526.7,347.4 525.6,351.0 523.3,352.0 524.1,352.4 523.7,353.4 520.3,356.1 522.5,359.6 519.9,359.7 517.6,360.3 518.6,363.0 514.5,368.1 514.6,367.1 514.6,366.4 511.3,367.8 514.5,365.8 515.7,362.4 518.2,356.6 522.9,358.3 523.6,354.8 525.1,353.1 527.8,348.8 529.0,348.0 530.4,349.0 535.8,346.0 537.0,342.7 534.0,340.1 537.7,342.8 538.0,338.9 537.2,335.5 540.0,335.6 536.4,337.6 537.2,334.9 536.8,332.8 534.9,333.4 540.8,335.4 541.4,334.0 539.0,332.7 538.5,330.2 536.6,332.7 536.3,331.7 534.4,327.7 536.3,326.7 536.6,328.7 532.9,329.9 534.8,324.1 532.5,327.5 532.2,327.8 535.7,329.6 531.2,325.3 532.2,326.3 534.3,326.5 532.4,327.8 536.5,327.6 536.7,325.7 535.2,330.5 536.2,332.3 532.7,332.3 531.1,330.8 534.3,336.0 534.6,336.9 530.8,334.6 531.9,333.2 532.1,336.1 527.6,333.6 531.5,332.1 534.1,329.1 534.8,331.5 538.8,332.2 538.2,333.1 542.6,331.1 547.6,332.2 545.4,335.6 547.4,330.7 547.1,329.1 544.6,326.1 545.0,328.7 546.9,321.6 550.5,321.4 550.4,321.9 549.8,325.1 548.5,326.0 544.7,326.6 548.5,329.3 546.0,331.4 542.9,334.1 546.0,331.3 540.4,332.9 538.8,335.1 539.6,335.8 534.7,333.1 534.5,336.4 530.0,338.2 524.8,340.0 527.2,338.4 526.6,342.3 523.9,341.6 525.2,344.1 525.1,342.6 519.8,342.7 519.2,344.6 521.7,346.1 519.1,348.1 519.9,346.6 519.0,354.1 516.1,353.1 518.2,356.2 514.8,355.8 513.0,360.8 513.9,360.1 508.6,361.6 506.8,363.3 507.1,364.2 507.8,367.0 509.1,368.4 509.0,370.1 509.0,371.5 505.5,375.5 508.3,375.3 510.7,376.6 508.1,375.4 513.9,376.0 513.2,371.4 508.7,373.1 513.4,370.4 512.0,371.6 512.7,369.2 515.6,371.4 512.7,369.5 517.3,369.3 520.3,370.8 519.7,367.6 525.5,368.9 528.2,365.7 524.9,367.6 524.0,363.9 526.4,367.6 524.5,365.4 524.3,366.3 526.9,366.4 524.4,367.5 524.9,366.5 525.3,367.2 523.0,369.6 526.7,369.4 526.0,370.2 523.9,372.2 525.8,372.6 525.4,370.6 527.2,371.3 528.5,368.2 528.0,368.8 527.1,365.0 525.8,365.2 526.4,359.3 524.2,361.9 527.5,359.5 530.8,358.2 524.7,357.5 527.2,358.9 528.6,360.0 525.0,355.8 529.6,358.8 529.0,355.6 529.6,357.0 533.0,352.4 529.6,352.5 533.1,349.9 536.0,351.5 531.5,349.4 530.4,347.8 530.0,349.3 527.9,351.1 527.7,348.3 531.1,345.3 532.1,345.3 531.5,342.9 533.2,339.0 531.1,335.0 533.9,335.4 538.5,331.8 537.6,332.5 540.2,326.7 541.6,328.7 541.9,326.5 544.9,326.2 545.4,319.6 547.4,319.0 548.5,319.3 548.3,315.5 549.5,314.7 550.9,314.2 555.2,318.6 552.2,315.1 551.5,316.8 554.5,315.9 548.1,318.8 549.0,317.5 552.0,316.5 549.4,315.3 552.3,318.6 549.6,318.5 548.6,316.3 552.7,317.1 548.5,322.6" fill="none" stroke="#00FF00" stroke-width="1" stroke-linejoin="round"/></svg>
<div class="t" style="left:17.28px;top:259px;font-family:'Liberation Mono';font-size:13.6px;font-weight:normal;color:#00FF00;transform:scaleX(0.718);">1OOOO</div>
<div class="t" style="left:9.29px;top:289px;font-family:'Liberation Mono';font-size:13.6px;font-weight:normal;color:#00FF00;transform:scaleX(0.857);">Lch</div>
<div class="t" style="left:40.17px;top:289px;font-family:'Liberation Mono';font-size:13.6px;font-weight:normal;color:#00FF00;transform:scaleX(0.833);">O</div>
<div class="t" style="left:9.48px;top:320px;font-family:'Liberation Mono';font-size:13.6px;font-weight:normal;color:#00FF00;transform:scaleX(0.761);">-1OOOO</div>
<div class="t" style="left:109.17px;top:333px;font-family:'Liberation Mono';font-size:13.6px;font-weight:normal;color:#00FF00;transform:scaleX(0.833);">5</div>
<div class="t" style="left:171.33px;top:333px;font-family:'Liberation Mono';font-size:13.6px;font-weight:normal;color:#00FF00;transform:scaleX(0.667);">1O</div>
<div class="t" style="left:235.27px;top:333px;font-family:'Liberation Mono';font-size:13.6px;font-weight:normal;color:#00FF00;transform:scaleX(0.733);">15</div>
<div class="t" style="left:299.27px;top:333px;font-family:'Liberation Mono';font-size:13.6px;font-weight:normal;color:#00FF00;transform:scaleX(0.733);">2O</div>
<div class="t" style="left:362.27px;top:333px;font-family:'Liberation Mono';font-size:13.6px;font-weight:normal;color:#00FF00;transform:scaleX(0.733);">25</div>
<div class="t" style="left:394.14px;top:334px;font-family:'Liberation Mono';font-size:13.6px;font-weight:normal;color:#00FF00;transform:scaleX(0.857);">ms</div>
<div class="t" style="left:426.27px;top:333px;font-family:'Liberation Mono';font-size:13.6px;font-weight:normal;color:#00FF00;transform:scaleX(0.733);">3O</div>
<div class="t" style="left:17.28px;top:347px;font-family:'Liberation Mono';font-size:13.6px;font-weight:normal;color:#00FF00;transform:scaleX(0.718);">1OOOO</div>
<div class="t" style="left:10.18px;top:378px;font-family:'Liberation Mono';font-size:13.6px;font-weight:normal;color:#00FF00;transform:scaleX(0.818);">Rch</div>
<div class="t" style="left:40.17px;top:378px;font-family:'Liberation Mono';font-size:13.6px;font-weight:normal;color:#00FF00;transform:scaleX(0.833);">O</div>
<div class="t" style="left:9.48px;top:408px;font-family:'Liberation Mono';font-size:13.6px;font-weight:normal;color:#00FF00;transform:scaleX(0.761);">-1OOOO</div>
</body></html>
